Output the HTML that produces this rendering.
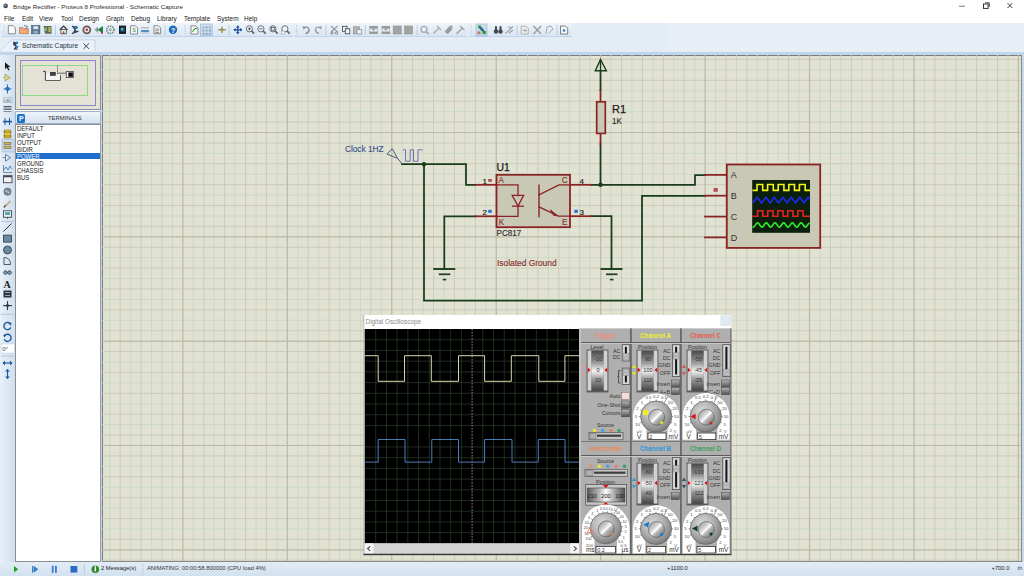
<!DOCTYPE html>
<html><head><meta charset="utf-8"><style>
*{margin:0;padding:0;box-sizing:border-box}
html,body{width:1024px;height:576px;overflow:hidden;background:#fff;font-family:"Liberation Sans", sans-serif;}
.a{position:absolute}
.t{position:absolute;white-space:nowrap;line-height:1}
</style></head>
<body>
<div class="a" style="left:0px;top:0px;width:1024px;height:22.5px;background:#fff"></div><svg class="a" style="left:0;top:0" width="1024" height="22"><circle cx="5.6" cy="5.9" r="2.3" fill="#3a4a5a"/><circle cx="5.1" cy="5.3" r="0.9" fill="#a8b8c8"/><line x1="959" y1="6.2" x2="965" y2="6.2" stroke="#666" stroke-width="0.9"/><rect x="983.5" y="4" width="4.6" height="4.4" fill="none" stroke="#222" stroke-width="0.9"/><path d="M985,2.8 L989.3,2.8 L989.3,7" fill="none" stroke="#222" stroke-width="0.8"/><path d="M1007.5,3.2 L1012.3,8 M1012.3,3.2 L1007.5,8" stroke="#222" stroke-width="0.9"/></svg><div class="t" style="left:13px;top:4.0px;font-size:6.25px;color:#2a2a2a;">Bridge Rectifier - Proteus 8 Professional - Schematic Capture</div><div class="t" style="left:4px;top:14.6px;font-size:7.2px;color:#1a1a1a;transform:scaleX(0.9);transform-origin:0 0">File</div><div class="t" style="left:21.6px;top:14.6px;font-size:7.2px;color:#1a1a1a;transform:scaleX(0.9);transform-origin:0 0">Edit</div><div class="t" style="left:39.2px;top:14.6px;font-size:7.2px;color:#1a1a1a;transform:scaleX(0.9);transform-origin:0 0">View</div><div class="t" style="left:60.6px;top:14.6px;font-size:7.2px;color:#1a1a1a;transform:scaleX(0.9);transform-origin:0 0">Tool</div><div class="t" style="left:79.2px;top:14.6px;font-size:7.2px;color:#1a1a1a;transform:scaleX(0.9);transform-origin:0 0">Design</div><div class="t" style="left:106.2px;top:14.6px;font-size:7.2px;color:#1a1a1a;transform:scaleX(0.9);transform-origin:0 0">Graph</div><div class="t" style="left:130.6px;top:14.6px;font-size:7.2px;color:#1a1a1a;transform:scaleX(0.9);transform-origin:0 0">Debug</div><div class="t" style="left:157px;top:14.6px;font-size:7.2px;color:#1a1a1a;transform:scaleX(0.9);transform-origin:0 0">Library</div><div class="t" style="left:184px;top:14.6px;font-size:7.2px;color:#1a1a1a;transform:scaleX(0.9);transform-origin:0 0">Template</div><div class="t" style="left:216.6px;top:14.6px;font-size:7.2px;color:#1a1a1a;transform:scaleX(0.9);transform-origin:0 0">System</div><div class="t" style="left:244.4px;top:14.6px;font-size:7.2px;color:#1a1a1a;transform:scaleX(0.9);transform-origin:0 0">Help</div><div class="a" style="left:0px;top:22.5px;width:1024px;height:29.3px;background:#e4ecf5"></div><div class="a" style="left:670px;top:22.5px;width:354px;height:29.3px;background:#e8eef6"></div><svg class="a" style="left:0;top:34px" width="110" height="20"><path d="M0,17.2 L11.8,5.9 L95,5.9 L95,17.2" fill="#eaf1f8" stroke="#c3d4e5" stroke-width="0.9"/><path d="M13.2,7.6 L18.5,9 L15.4,11 L18.8,12.6 L16,14 L18.6,15.4 L13.5,15.6 L15.5,12.5 L13.2,11 Z" fill="#2a3a50"/><circle cx="17" cy="8.8" r="1.2" fill="#2a80c8"/><circle cx="16.8" cy="13" r="1.2" fill="#2a80c8"/><path d="M83.4,9.3 L89,14.9 M89,9.3 L83.4,14.9" stroke="#3a3a3a" stroke-width="0.9"/></svg><div class="t" style="left:22px;top:43.0px;font-size:6.6px;color:#23303e;">Schematic Capture</div><div class="a" style="left:0px;top:51.6px;width:1024px;height:3.6px;background:#bfd5ea"></div><div class="a" style="left:0px;top:55px;width:15px;height:507px;background:linear-gradient(to right,#e8f0f8,#d0dfee)"></div><div class="a" style="left:15px;top:55px;width:86px;height:55px;background:#e3e2d4;border:1px solid #8a8f96"></div><div class="a" style="left:20px;top:60px;width:76px;height:46px;border:1.3px solid #8a86cc"></div><div class="a" style="left:22px;top:65px;width:66px;height:31px;border:1px solid #8ada8a"></div><div class="a" style="left:15px;top:111px;width:86px;height:13px;background:linear-gradient(#eef4fa,#d6e3f0);border:1px solid #9fb4c8"></div><div class="a" style="left:17px;top:113.5px;width:8.3px;height:9px;background:#1a73c8;border-radius:1.5px"></div><div class="t" style="left:19px;top:114.6px;font-size:7px;color:#fff;font-weight:bold">P</div><div class="t" style="left:48px;top:116.2px;font-size:5.9px;color:#333;">TERMINALS</div><div class="a" style="left:15px;top:124px;width:85.5px;height:438px;background:#fff;border:1px solid #8a8f96;border-right:1.6px solid #9a9ea4"></div><div class="a" style="left:16px;top:153.2px;width:84px;height:5.8px;background:#1f6dcc"></div><div class="t" style="left:17.4px;top:126.0px;font-size:6.35px;color:#1a1a1a;transform:scaleX(0.94);transform-origin:0 0">DEFAULT</div><div class="t" style="left:17.4px;top:132.95px;font-size:6.35px;color:#1a1a1a;transform:scaleX(0.94);transform-origin:0 0">INPUT</div><div class="t" style="left:17.4px;top:139.9px;font-size:6.35px;color:#1a1a1a;transform:scaleX(0.94);transform-origin:0 0">OUTPUT</div><div class="t" style="left:17.4px;top:146.85px;font-size:6.35px;color:#1a1a1a;transform:scaleX(0.94);transform-origin:0 0">BIDIR</div><div class="t" style="left:17.4px;top:153.8px;font-size:6.35px;color:#fff;transform:scaleX(0.94);transform-origin:0 0">POWER</div><div class="t" style="left:17.4px;top:160.75px;font-size:6.35px;color:#1a1a1a;transform:scaleX(0.94);transform-origin:0 0">GROUND</div><div class="t" style="left:17.4px;top:167.7px;font-size:6.35px;color:#1a1a1a;transform:scaleX(0.94);transform-origin:0 0">CHASSIS</div><div class="t" style="left:17.4px;top:174.65px;font-size:6.35px;color:#1a1a1a;transform:scaleX(0.94);transform-origin:0 0">BUS</div><div class="a" style="left:100.5px;top:55px;width:2px;height:507px;background:#c3d7ea"></div><div class="a" style="left:102px;top:55px;width:920px;height:507px;background:#e2e2d3;border-left:1px solid #777c80;border-top:1px solid #777c80"></div><div class="a" style="left:1022px;top:55px;width:2px;height:507px;background:#c7d9ea"></div><svg class="a" style="left:102px;top:55px" width="920" height="507"><g stroke="#c8d8c6" stroke-width="0.9"><line x1="7.79" y1="0" x2="7.79" y2="507"/><line x1="28.68" y1="0" x2="28.68" y2="507"/><line x1="49.57" y1="0" x2="49.57" y2="507"/><line x1="70.45" y1="0" x2="70.45" y2="507"/><line x1="91.34" y1="0" x2="91.34" y2="507"/><line x1="112.23" y1="0" x2="112.23" y2="507"/><line x1="133.12" y1="0" x2="133.12" y2="507"/><line x1="154.01" y1="0" x2="154.01" y2="507"/><line x1="174.89" y1="0" x2="174.89" y2="507"/><line x1="195.78" y1="0" x2="195.78" y2="507"/><line x1="216.67" y1="0" x2="216.67" y2="507"/><line x1="237.56" y1="0" x2="237.56" y2="507"/><line x1="258.45" y1="0" x2="258.45" y2="507"/><line x1="279.33" y1="0" x2="279.33" y2="507"/><line x1="300.22" y1="0" x2="300.22" y2="507"/><line x1="321.11" y1="0" x2="321.11" y2="507"/><line x1="342.00" y1="0" x2="342.00" y2="507"/><line x1="362.89" y1="0" x2="362.89" y2="507"/><line x1="383.77" y1="0" x2="383.77" y2="507"/><line x1="404.66" y1="0" x2="404.66" y2="507"/><line x1="425.55" y1="0" x2="425.55" y2="507"/><line x1="446.44" y1="0" x2="446.44" y2="507"/><line x1="467.33" y1="0" x2="467.33" y2="507"/><line x1="488.21" y1="0" x2="488.21" y2="507"/><line x1="509.10" y1="0" x2="509.10" y2="507"/><line x1="529.99" y1="0" x2="529.99" y2="507"/><line x1="550.88" y1="0" x2="550.88" y2="507"/><line x1="571.77" y1="0" x2="571.77" y2="507"/><line x1="592.65" y1="0" x2="592.65" y2="507"/><line x1="613.54" y1="0" x2="613.54" y2="507"/><line x1="634.43" y1="0" x2="634.43" y2="507"/><line x1="655.32" y1="0" x2="655.32" y2="507"/><line x1="676.21" y1="0" x2="676.21" y2="507"/><line x1="697.09" y1="0" x2="697.09" y2="507"/><line x1="717.98" y1="0" x2="717.98" y2="507"/><line x1="738.87" y1="0" x2="738.87" y2="507"/><line x1="759.76" y1="0" x2="759.76" y2="507"/><line x1="780.65" y1="0" x2="780.65" y2="507"/><line x1="801.53" y1="0" x2="801.53" y2="507"/><line x1="822.42" y1="0" x2="822.42" y2="507"/><line x1="843.31" y1="0" x2="843.31" y2="507"/><line x1="864.20" y1="0" x2="864.20" y2="507"/><line x1="885.09" y1="0" x2="885.09" y2="507"/><line x1="905.97" y1="0" x2="905.97" y2="507"/><line x1="0" y1="14.90" x2="920" y2="14.90"/><line x1="0" y1="35.77" x2="920" y2="35.77"/><line x1="0" y1="56.63" x2="920" y2="56.63"/><line x1="0" y1="98.37" x2="920" y2="98.37"/><line x1="0" y1="119.23" x2="920" y2="119.23"/><line x1="0" y1="140.10" x2="920" y2="140.10"/><line x1="0" y1="160.97" x2="920" y2="160.97"/><line x1="0" y1="202.70" x2="920" y2="202.70"/><line x1="0" y1="223.56" x2="920" y2="223.56"/><line x1="0" y1="244.43" x2="920" y2="244.43"/><line x1="0" y1="265.29" x2="920" y2="265.29"/><line x1="0" y1="307.03" x2="920" y2="307.03"/><line x1="0" y1="327.89" x2="920" y2="327.89"/><line x1="0" y1="348.76" x2="920" y2="348.76"/><line x1="0" y1="369.62" x2="920" y2="369.62"/><line x1="0" y1="411.36" x2="920" y2="411.36"/><line x1="0" y1="432.22" x2="920" y2="432.22"/><line x1="0" y1="453.09" x2="920" y2="453.09"/><line x1="0" y1="473.96" x2="920" y2="473.96"/></g><g stroke="#c8c8b4" stroke-width="0.9"><line x1="18.23" y1="0" x2="18.23" y2="507"/><line x1="39.12" y1="0" x2="39.12" y2="507"/><line x1="60.01" y1="0" x2="60.01" y2="507"/><line x1="101.79" y1="0" x2="101.79" y2="507"/><line x1="122.67" y1="0" x2="122.67" y2="507"/><line x1="143.56" y1="0" x2="143.56" y2="507"/><line x1="164.45" y1="0" x2="164.45" y2="507"/><line x1="206.23" y1="0" x2="206.23" y2="507"/><line x1="227.11" y1="0" x2="227.11" y2="507"/><line x1="248.00" y1="0" x2="248.00" y2="507"/><line x1="268.89" y1="0" x2="268.89" y2="507"/><line x1="310.67" y1="0" x2="310.67" y2="507"/><line x1="331.55" y1="0" x2="331.55" y2="507"/><line x1="352.44" y1="0" x2="352.44" y2="507"/><line x1="373.33" y1="0" x2="373.33" y2="507"/><line x1="415.11" y1="0" x2="415.11" y2="507"/><line x1="435.99" y1="0" x2="435.99" y2="507"/><line x1="456.88" y1="0" x2="456.88" y2="507"/><line x1="477.77" y1="0" x2="477.77" y2="507"/><line x1="519.55" y1="0" x2="519.55" y2="507"/><line x1="540.43" y1="0" x2="540.43" y2="507"/><line x1="561.32" y1="0" x2="561.32" y2="507"/><line x1="582.21" y1="0" x2="582.21" y2="507"/><line x1="623.99" y1="0" x2="623.99" y2="507"/><line x1="644.87" y1="0" x2="644.87" y2="507"/><line x1="665.76" y1="0" x2="665.76" y2="507"/><line x1="686.65" y1="0" x2="686.65" y2="507"/><line x1="728.43" y1="0" x2="728.43" y2="507"/><line x1="749.31" y1="0" x2="749.31" y2="507"/><line x1="770.20" y1="0" x2="770.20" y2="507"/><line x1="791.09" y1="0" x2="791.09" y2="507"/><line x1="832.87" y1="0" x2="832.87" y2="507"/><line x1="853.75" y1="0" x2="853.75" y2="507"/><line x1="874.64" y1="0" x2="874.64" y2="507"/><line x1="895.53" y1="0" x2="895.53" y2="507"/><line x1="0" y1="4.47" x2="920" y2="4.47"/><line x1="0" y1="25.34" x2="920" y2="25.34"/><line x1="0" y1="46.20" x2="920" y2="46.20"/><line x1="0" y1="67.07" x2="920" y2="67.07"/><line x1="0" y1="87.93" x2="920" y2="87.93"/><line x1="0" y1="108.80" x2="920" y2="108.80"/><line x1="0" y1="129.67" x2="920" y2="129.67"/><line x1="0" y1="150.53" x2="920" y2="150.53"/><line x1="0" y1="171.40" x2="920" y2="171.40"/><line x1="0" y1="192.26" x2="920" y2="192.26"/><line x1="0" y1="213.13" x2="920" y2="213.13"/><line x1="0" y1="234.00" x2="920" y2="234.00"/><line x1="0" y1="254.86" x2="920" y2="254.86"/><line x1="0" y1="275.73" x2="920" y2="275.73"/><line x1="0" y1="296.59" x2="920" y2="296.59"/><line x1="0" y1="317.46" x2="920" y2="317.46"/><line x1="0" y1="338.33" x2="920" y2="338.33"/><line x1="0" y1="359.19" x2="920" y2="359.19"/><line x1="0" y1="380.06" x2="920" y2="380.06"/><line x1="0" y1="400.92" x2="920" y2="400.92"/><line x1="0" y1="421.79" x2="920" y2="421.79"/><line x1="0" y1="442.66" x2="920" y2="442.66"/><line x1="0" y1="463.52" x2="920" y2="463.52"/><line x1="0" y1="484.39" x2="920" y2="484.39"/><line x1="0" y1="505.25" x2="920" y2="505.25"/></g><g stroke="#b9b9a5" stroke-width="1.2"><line x1="80.90" y1="0" x2="80.90" y2="507"/><line x1="185.34" y1="0" x2="185.34" y2="507"/><line x1="289.78" y1="0" x2="289.78" y2="507"/><line x1="394.22" y1="0" x2="394.22" y2="507"/><line x1="498.66" y1="0" x2="498.66" y2="507"/><line x1="603.10" y1="0" x2="603.10" y2="507"/><line x1="707.54" y1="0" x2="707.54" y2="507"/><line x1="811.98" y1="0" x2="811.98" y2="507"/><line x1="916.42" y1="0" x2="916.42" y2="507"/><line x1="0" y1="77.50" x2="920" y2="77.50"/><line x1="0" y1="181.83" x2="920" y2="181.83"/><line x1="0" y1="286.16" x2="920" y2="286.16"/><line x1="0" y1="390.49" x2="920" y2="390.49"/><line x1="0" y1="494.82" x2="920" y2="494.82"/></g></svg><div class="a" style="left:102px;top:561px;width:920px;height:1px;background:#8a8a84"></div><div class="a" style="left:1021px;top:55px;width:1px;height:507px;background:#8a8a84"></div><div class="a" style="left:0px;top:562px;width:1024px;height:14px;background:linear-gradient(#e2ecf6,#d2e1ef)"></div><div class="t" style="left:101px;top:566px;font-size:5.8px;color:#222;">2 Message(s)</div><div class="t" style="left:147px;top:566px;font-size:5.8px;color:#333;">ANIMATING: 00:00:58.800000 (CPU load 4%)</div><div class="t" style="left:667px;top:566px;font-size:5.8px;color:#222;">+1100.0</div><div class="t" style="left:991.5px;top:566px;font-size:5.8px;color:#222;">+700.0</div><div class="t" style="left:1017.5px;top:566px;font-size:5.8px;color:#2a5a7a;">th</div>
<svg class="a" style="left:0;top:0" width="1024" height="576"><defs>
<linearGradient id="tbg" x1="0" y1="0" x2="0" y2="1"><stop offset="0" stop-color="#eef4fa"/><stop offset="1" stop-color="#d8e5f2"/></linearGradient>
<linearGradient id="prs" x1="0" y1="0" x2="0" y2="1"><stop offset="0" stop-color="#cfe0f0"/><stop offset="1" stop-color="#bcd2e8"/></linearGradient>
</defs><rect x="2" y="23" width="180" height="13.8" fill="url(#tbg)"/><rect x="2" y="36" width="180" height="0.8" fill="#bcd0e4"/><line x1="4" y1="25" x2="4" y2="35" stroke="#9fb4c8" stroke-width="0.8" stroke-dasharray="0.8 1.2"/><rect x="183" y="23" width="110" height="13.8" fill="url(#tbg)"/><rect x="183" y="36" width="110" height="0.8" fill="#bcd0e4"/><line x1="185" y1="25" x2="185" y2="35" stroke="#9fb4c8" stroke-width="0.8" stroke-dasharray="0.8 1.2"/><rect x="294.5" y="23" width="173.0" height="13.8" fill="url(#tbg)"/><rect x="294.5" y="36" width="173.0" height="0.8" fill="#bcd0e4"/><line x1="296.5" y1="25" x2="296.5" y2="35" stroke="#9fb4c8" stroke-width="0.8" stroke-dasharray="0.8 1.2"/><rect x="469" y="23" width="103" height="13.8" fill="url(#tbg)"/><rect x="469" y="36" width="103" height="0.8" fill="#bcd0e4"/><line x1="471" y1="25" x2="471" y2="35" stroke="#9fb4c8" stroke-width="0.8" stroke-dasharray="0.8 1.2"/><line x1="55.5" y1="25" x2="55.5" y2="35" stroke="#b5c6d8" stroke-width="0.8"/><line x1="165" y1="25" x2="165" y2="35" stroke="#b5c6d8" stroke-width="0.8"/><line x1="229" y1="25" x2="229" y2="35" stroke="#b5c6d8" stroke-width="0.8"/><line x1="326" y1="25" x2="326" y2="35" stroke="#b5c6d8" stroke-width="0.8"/><line x1="365.5" y1="25" x2="365.5" y2="35" stroke="#b5c6d8" stroke-width="0.8"/><line x1="417" y1="25" x2="417" y2="35" stroke="#b5c6d8" stroke-width="0.8"/><line x1="517" y1="25" x2="517" y2="35" stroke="#b5c6d8" stroke-width="0.8"/><line x1="557" y1="25" x2="557" y2="35" stroke="#b5c6d8" stroke-width="0.8"/><rect x="200.5" y="24" width="11.7" height="12" fill="url(#prs)" stroke="#98b4d0" stroke-width="0.6"/><rect x="476" y="24" width="11" height="12" fill="url(#prs)" stroke="#98b4d0" stroke-width="0.6"/><path d="M8.3,25.6 L13.100000000000001,25.6 L15.3,27.8 L15.3,33.8 L8.3,33.8 Z" fill="#fbfbfb" stroke="#707070" stroke-width="0.8"/><path d="M19.6,27.5 L23,27.5 L24,28.6 L28.3,28.6 L28.3,33.6 L19.6,33.6 Z" fill="#f2a080" stroke="#c07050" stroke-width="0.7"/><path d="M24,25.5 L27.5,26.5 L25.5,29" fill="none" stroke="#5080b0" stroke-width="1"/><rect x="21.5" y="31.3" width="1.6" height="1.3" fill="#f0e020"/><rect x="24.2" y="31.3" width="1.6" height="1.3" fill="#f0e020"/><rect x="31.6" y="25.6" width="8.3" height="8.2" fill="#5a7894" stroke="#3a5670" stroke-width="0.6"/><rect x="33.4" y="26.2" width="4.8" height="3" fill="#dfe8f0"/><rect x="33.6" y="31" width="4" height="2.5" fill="#9ab0c4"/><path d="M43.5,26 L51.5,26 L51.5,33.8 L45,33.8 Z" fill="#606860"/><rect x="44" y="27.5" width="3" height="3.5" fill="#80b070"/><rect x="48.5" y="27" width="2" height="5" fill="#c0c060"/><path d="M59.8,30 L63.6,26 L67.4,30" fill="none" stroke="#303030" stroke-width="1.2"/><rect x="61" y="29.6" width="5.2" height="4.2" fill="#f8f8f8" stroke="#404040" stroke-width="0.8"/><rect x="62.8" y="31.3" width="1.6" height="2.5" fill="#a05030"/><path d="M72,26 L78,27.5 L74,30 L78.5,31.5 L72,33.8 L75,30 Z" fill="#3a4a6a" stroke="#1a2a4a" stroke-width="0.6"/><circle cx="76" cy="27" r="1.3" fill="#2a80c0"/><circle cx="86.8" cy="29.8" r="3.5" fill="none" stroke="#6a5a50" stroke-width="1.8"/><circle cx="86.8" cy="29.8" r="1.3" fill="#d03030"/><path d="M94.5,29.8 L98,26.5 L98,33 Z" fill="#8aa0a0"/><path d="M97.5,29.8 L103,26 L103,33.6 Z" fill="#208040"/><rect x="101" y="32" width="2" height="1.6" fill="#c03030"/><circle cx="110.3" cy="29.8" r="3.6" fill="none" stroke="#80908a" stroke-width="1.8" stroke-dasharray="1.5 0.8"/><circle cx="110.3" cy="29.8" r="1.5" fill="#a0b0a0"/><rect x="119" y="25.6" width="7" height="8.3" fill="#1a1a1a"/><rect x="120.5" y="27.5" width="4" height="4" fill="#2a6aa0"/><rect x="121" y="28" width="2" height="2" fill="#40c0a0"/><path d="M130.6,25.8 L135.4,25.8 L137.6,28.0 L137.6,34.0 L130.6,34.0 Z" fill="#fbfbfb" stroke="#707070" stroke-width="0.8"/><text x="132.4" y="32.4" font-size="6" fill="#50a040" font-family="Liberation Sans">$</text><rect x="141" y="27" width="8" height="1.4" fill="#b0b8c8"/><rect x="141" y="30" width="8" height="2.2" fill="#5090c0"/><rect x="141" y="32.8" width="8" height="0.8" fill="#c0c8d8"/><path d="M154,25.8 L158.4,25.8 L160.6,28.0 L160.6,33.8 L154,33.8 Z" fill="#fbfbfb" stroke="#707070" stroke-width="0.8"/><line x1="155.3" y1="29" x2="159.2" y2="29" stroke="#555" stroke-width="0.7"/><line x1="155.3" y1="30.8" x2="159.2" y2="30.8" stroke="#555" stroke-width="0.7"/><line x1="155.3" y1="32.6" x2="159.2" y2="32.6" stroke="#555" stroke-width="0.7"/><circle cx="173" cy="29.8" r="4.2" fill="#1a6ab8"/><text x="170.9" y="32.6" font-size="7" font-weight="bold" fill="#fff" font-family="Liberation Sans">?</text><path d="M191,25.8 L195.8,25.8 L198,28.0 L198,34.0 L191,34.0 Z" fill="#fbfbfb" stroke="#707070" stroke-width="0.8"/><path d="M192.5,32 Q195,27 197,29" fill="none" stroke="#40a040" stroke-width="1.1"/><rect x="202.7" y="26.6" width="1.6" height="1.6" fill="#8a9aaa"/><rect x="205.89999999999998" y="26.6" width="1.6" height="1.6" fill="#8a9aaa"/><rect x="209.1" y="26.6" width="1.6" height="1.6" fill="#8a9aaa"/><rect x="202.7" y="29.8" width="1.6" height="1.6" fill="#8a9aaa"/><rect x="205.89999999999998" y="29.8" width="1.6" height="1.6" fill="#8a9aaa"/><rect x="209.1" y="29.8" width="1.6" height="1.6" fill="#8a9aaa"/><rect x="202.7" y="33.0" width="1.6" height="1.6" fill="#8a9aaa"/><rect x="205.89999999999998" y="33.0" width="1.6" height="1.6" fill="#8a9aaa"/><rect x="209.1" y="33.0" width="1.6" height="1.6" fill="#8a9aaa"/><line x1="218" y1="29.8" x2="226" y2="29.8" stroke="#807060" stroke-width="1"/><line x1="222" y1="26.5" x2="222" y2="33" stroke="#807060" stroke-width="1"/><circle cx="222" cy="29.8" r="1.6" fill="#a09040"/><path d="M237.8,26 L237.8,33.6 M234,29.8 L241.6,29.8" stroke="#1a4aa0" stroke-width="1.3"/><path d="M237.8,25.3 L236,27.6 L239.6,27.6 Z M237.8,34.3 L236,32 L239.6,32 Z M233.3,29.8 L235.6,28 L235.6,31.6 Z M242.3,29.8 L240,28 L240,31.6 Z" fill="#1a4aa0"/><circle cx="249.4" cy="28.8" r="3.1" fill="#f0f4f8" stroke="#6a7078" stroke-width="1"/><line x1="251.5" y1="30.9" x2="254.10000000000002" y2="33.7" stroke="#606468" stroke-width="1.7"/><path d="M247.8,28.8 L251.0,28.8 M249.4,27.2 L249.4,30.4" stroke="#404850" stroke-width="0.8"/><circle cx="260.90000000000003" cy="28.8" r="3.1" fill="#f0f4f8" stroke="#6a7078" stroke-width="1"/><line x1="263.0" y1="30.9" x2="265.6" y2="33.7" stroke="#606468" stroke-width="1.7"/><path d="M259.3,28.8 L262.5,28.8" stroke="#404850" stroke-width="0.8"/><circle cx="272.90000000000003" cy="28.8" r="3.1" fill="#f0f4f8" stroke="#6a7078" stroke-width="1"/><line x1="275.0" y1="30.9" x2="277.6" y2="33.7" stroke="#606468" stroke-width="1.7"/><rect x="271.5" y="27.4" width="2.8" height="2.8" fill="none" stroke="#404850" stroke-width="0.7"/><circle cx="284.90000000000003" cy="28.8" r="3.1" fill="#f0f4f8" stroke="#6a7078" stroke-width="1"/><line x1="287.0" y1="30.9" x2="289.6" y2="33.7" stroke="#606468" stroke-width="1.7"/><rect x="281.3" y="31" width="3.2" height="3" fill="#fff" stroke="#8a8a8a" stroke-width="0.5"/><path d="M303.5,27.5 Q309.5,26 309,30.5 Q308.5,33 305.5,33.5" fill="none" stroke="#8a8a8a" stroke-width="1.4"/><path d="M302.5,26 L303.5,29.5 L306,27.5 Z" fill="#8a8a8a"/><path d="M321,27.5 Q315,26 315.5,30.5 Q316,33 319,33.5" fill="none" stroke="#9a9a9a" stroke-width="1.4"/><path d="M322,26 L321,29.5 L318.5,27.5 Z" fill="#9a9a9a"/><path d="M331,26 L337.5,32 M337.5,26 L331,32" stroke="#9a9a9a" stroke-width="1.2"/><circle cx="332" cy="33" r="1.2" fill="none" stroke="#8a8a8a"/><circle cx="336.5" cy="33" r="1.2" fill="none" stroke="#8a8a8a"/><rect x="342.5" y="26.3" width="4.5" height="5" fill="#f4f4f4" stroke="#404040" stroke-width="0.8"/><rect x="345.3" y="28.8" width="4.5" height="5" fill="#f4f4f4" stroke="#404040" stroke-width="0.8"/><rect x="353.5" y="26.8" width="6" height="7" fill="#b8b8b8" stroke="#8a8a8a" stroke-width="0.7"/><rect x="357" y="29.5" width="4.8" height="4.5" fill="#eee" stroke="#8a8a8a" stroke-width="0.7"/><rect x="369.3" y="26" width="8.6" height="2.2" fill="#9a9a9a"/><rect x="369.3" y="32" width="8.6" height="2" fill="#9a9a9a"/><path d="M371.3,28.2 L375.90000000000003,28.2 L373.6,31 Z" fill="#9a9a9a"/><rect x="369.8" y="28.5" width="7.6" height="3.3" fill="none" stroke="#a8a8a8" stroke-width="0.6"/><rect x="381.6" y="26" width="8.6" height="2.2" fill="#9a9a9a"/><rect x="381.6" y="32" width="8.6" height="2" fill="#9a9a9a"/><path d="M383.6,28.2 L388.20000000000005,28.2 L385.90000000000003,31 Z" fill="#9a9a9a"/><rect x="382.1" y="28.5" width="7.6" height="3.3" fill="none" stroke="#a8a8a8" stroke-width="0.6"/><rect x="393.2" y="26" width="8" height="8" fill="#a4a4a4" stroke="#909090" stroke-width="0.6"/><rect x="404.5" y="26" width="8" height="8" fill="#a4a4a4" stroke="#909090" stroke-width="0.6"/><circle cx="424" cy="29.3" r="3" fill="none" stroke="#a8a8a8" stroke-width="1.3"/><line x1="426" y1="31.4" x2="428.8" y2="34" stroke="#a0a0a0" stroke-width="1.4"/><path d="M433.5,33.5 L439,28 M437,26 L441,30" stroke="#b0b0b0" stroke-width="1.5"/><path d="M444.5,32 L449,26.5 L452.5,29 L448,34 Z" fill="#9a9a9a"/><circle cx="451" cy="27" r="1.8" fill="#a8a8a8"/><path d="M456.5,33.8 L462,28.5 M460,26 L464.5,30" stroke="#a8a8a8" stroke-width="1.6"/><rect x="478" y="25.5" width="3" height="2.5" fill="#30a040"/><path d="M479.5,28 L485,33 M481,27 L484,31" stroke="#2a5a80" stroke-width="1.2"/><rect x="482.5" y="31" width="3.5" height="3" fill="#30a040"/><rect x="477.5" y="31.5" width="3" height="2.5" fill="#d07060"/><circle cx="496" cy="31.5" r="2.2" fill="#404850"/><circle cx="500.5" cy="31.5" r="2.2" fill="#404850"/><rect x="495" y="26.2" width="2" height="4" fill="#404850"/><rect x="499.5" y="26.2" width="2" height="4" fill="#404850"/><path d="M505.5,33.5 L513,26.5 M508,27 L512,27.5 M509,33 L513,30" stroke="#a0a0a0" stroke-width="1.2"/><path d="M521.2,26.2 L526.0,26.2 L528.2,28.4 L528.2,34.0 L521.2,34.0 Z" fill="#f0f0f0" stroke="#a0a0a0" stroke-width="0.8"/><path d="M523,30.5 L527,30.5 M525,28.5 L525,32.5" stroke="#999" stroke-width="0.8"/><path d="M533.5,26 L541,34 M541,26 L533.5,34" stroke="#a0a0a0" stroke-width="1.6"/><path d="M546,34 L547,27 L551,26 L553,29 L549,33" fill="none" stroke="#a8a8a8" stroke-width="1"/><path d="M560.5,26 L565.5,26 L567.7,28.2 L567.7,34 L560.5,34 Z" fill="#f8f8f8" stroke="#606060" stroke-width="0.8"/><circle cx="564" cy="30.5" r="1.3" fill="#2a7ac0"/><rect x="2" y="139" width="12" height="13" fill="#c8daec" stroke="#9cb6cf" stroke-width="0.6"/><path d="M5,62.3 L5,69.3 L6.8,67.6 L8.3,70.6 L9.5,69.89999999999999 L8.1,67.0 L10.4,66.89999999999999 Z" fill="#1a1a1a"/><path d="M5,74.0 L10.5,77.6 L5,81.19999999999999 Z" fill="#e0d070" stroke="#909060" stroke-width="0.6"/><line x1="3" y1="77.6" x2="5" y2="77.6" stroke="#888" stroke-width="0.6"/><line x1="7.5" y1="84.4" x2="7.5" y2="93.4" stroke="#2060a0" stroke-width="0.9"/><line x1="3.5" y1="88.9" x2="11.5" y2="88.9" stroke="#2060a0" stroke-width="0.9"/><circle cx="7.5" cy="88.9" r="2.1" fill="#2070c0"/><rect x="3.5" y="97.5" width="8.5" height="5" fill="none" stroke="#8090a0" stroke-width="0.6" stroke-dasharray="1 0.6"/><text x="4" y="102" font-size="4" fill="#506070" font-family="Liberation Sans">LBL</text><rect x="3.5" y="106" width="8" height="1.3" fill="#505a64"/><rect x="3.5" y="108.5" width="8" height="1.3" fill="#505a64"/><rect x="3.5" y="111" width="8" height="1" fill="#8090a0"/><line x1="3" y1="121.6" x2="12" y2="121.6" stroke="#1a5aa0" stroke-width="1.6"/><line x1="5" y1="118.1" x2="5" y2="125.1" stroke="#1a5aa0" stroke-width="1"/><line x1="9.5" y1="118.1" x2="9.5" y2="125.1" stroke="#1a5aa0" stroke-width="1"/><rect x="4.5" y="130" width="6" height="8" fill="#e8c830" stroke="#807030" stroke-width="0.6"/><line x1="3" y1="132" x2="12" y2="132" stroke="#605020" stroke-width="0.6"/><line x1="3" y1="136" x2="12" y2="136" stroke="#605020" stroke-width="0.6"/><rect x="4" y="142.3" width="7" height="2.4" fill="#d0b040" stroke="#606060" stroke-width="0.5"/><rect x="4" y="146.10000000000002" width="7" height="2.4" fill="#d0b040" stroke="#606060" stroke-width="0.5"/><path d="M5.5,154.2 L10.5,157.7 L5.5,161.2 Z" fill="none" stroke="#4a6a8a" stroke-width="0.8"/><line x1="2.5" y1="157.7" x2="5.5" y2="157.7" stroke="#4a6a8a" stroke-width="0.8"/><path d="M3.5,172.5 L12,172.5 M3.5,165 L3.5,172.5" stroke="#506070" stroke-width="0.7" fill="none"/><polyline points="4,170 6,167 8,170 10,166 12,169" fill="none" stroke="#2a6ab0" stroke-width="0.8"/><rect x="3.5" y="175.7" width="8.5" height="7" fill="#f4f4f4" stroke="#404a54" stroke-width="0.9"/><rect x="3.5" y="175.7" width="8.5" height="1.6" fill="#404a54"/><circle cx="7.5" cy="191.7" r="3.6" fill="#7a8a9a" stroke="#4a5a6a" stroke-width="0.6"/><path d="M5,191.7 Q6.5,189.2 7.5,191.7 T10,191.7" fill="none" stroke="#e0e8f0" stroke-width="0.8"/><path d="M4,207.5 L10.5,201" stroke="#c0a060" stroke-width="1.4"/><path d="M4,207.5 L5.5,205.2" stroke="#505050" stroke-width="1.2"/><rect x="3.5" y="210.8" width="8" height="6.5" fill="#f0f0f0" stroke="#404a54" stroke-width="0.9"/><rect x="5" y="212.3" width="5" height="2.5" fill="#40a0a0"/><line x1="7.5" y1="217.3" x2="7.5" y2="218.8" stroke="#404a54" stroke-width="1"/><line x1="1" y1="221.5" x2="14" y2="221.5" stroke="#a9bdd0" stroke-width="0.8"/><line x1="3.5" y1="231.5" x2="11.5" y2="223.5" stroke="#2a3a4a" stroke-width="1"/><rect x="3.5" y="235.1" width="8" height="7" fill="#6a8aa0" stroke="#2a3a4a" stroke-width="0.8"/><circle cx="7.5" cy="250" r="4" fill="#6a8aa0" stroke="#2a3a4a" stroke-width="0.8"/><path d="M4,264.5 L4,257.5 Q10.5,257.5 10.5,264.5 Z" fill="none" stroke="#2a3a4a" stroke-width="0.8"/><path d="M3.5,272.6 Q5.5,268.6 7.5,272.6 Q9.5,276.6 11.5,272.6 Q9.5,268.6 7.5,272.6 Q5.5,276.6 3.5,272.6 Z" fill="#7a9ab0" stroke="#2a3a4a" stroke-width="0.8"/><text x="3.5" y="287.55" font-size="10" font-weight="bold" fill="#1a1a1a" font-family="Liberation Serif">A</text><rect x="3.5" y="290.5" width="8" height="7" fill="#2a3440"/><path d="M5,292.5 L10,292.5 M5,295.5 L10,295.5" stroke="#c0c8d0" stroke-width="0.8"/><line x1="7.5" y1="301.1" x2="7.5" y2="310.1" stroke="#2a3a4a" stroke-width="1.1"/><line x1="3" y1="305.6" x2="12" y2="305.6" stroke="#2a3a4a" stroke-width="1.1"/><circle cx="7.5" cy="305.6" r="1.5" fill="#2a3a4a"/><line x1="1" y1="314.3" x2="14" y2="314.3" stroke="#a9bdd0" stroke-width="0.8"/><path d="M10.5,324.0 A3.6,3.6 0 1 0 10.8,327.5" fill="none" stroke="#1a5aa0" stroke-width="1.4"/><path d="M9,322.3 L11.8,323.3 L10.2,326.0 Z" fill="#1a5aa0"/><path d="M4.5,335.8 A3.6,3.6 0 1 1 4.2,339.3" fill="none" stroke="#1a5aa0" stroke-width="1.4"/><path d="M6,334.1 L3.2,335.1 L4.8,337.8 Z" fill="#1a5aa0"/><rect x="1" y="344" width="13.5" height="9" fill="#fff" stroke="#b8c8d8" stroke-width="0.5"/><text x="2.2" y="351" font-size="6" fill="#444" font-family="Liberation Sans">0°</text><line x1="1" y1="356" x2="14" y2="356" stroke="#a9bdd0" stroke-width="0.8"/><line x1="3" y1="363" x2="12" y2="363" stroke="#1a5aa0" stroke-width="1.2"/><path d="M2.5,363 L5,360.6 L5,365.4 Z M12.5,363 L10,360.6 L10,365.4 Z" fill="#1a5aa0"/><line x1="7.5" y1="369.5" x2="7.5" y2="378.5" stroke="#1a5aa0" stroke-width="1.2"/><path d="M7.5,369 L5.1,371.5 L9.9,371.5 Z M7.5,379 L5.1,376.5 L9.9,376.5 Z" fill="#1a5aa0"/><path d="M14,566 L18.2,569.3 L14,572.6 Z" fill="#20a020"/><rect x="32" y="566" width="1.5" height="6.6" fill="#3a7ac8"/><path d="M34,566 L38.3,569.3 L34,572.6 Z" fill="#3a7ac8"/><rect x="51.8" y="565.8" width="1.8" height="7" fill="#3a7ac8"/><rect x="55" y="565.8" width="1.8" height="7" fill="#3a7ac8"/><rect x="70.5" y="566" width="6.8" height="6.6" fill="#2a6ac8"/><line x1="84.4" y1="564" x2="84.4" y2="575" stroke="#b0c4d8" stroke-width="0.8"/><circle cx="95.3" cy="569.3" r="3.8" fill="#2a8a2a"/><rect x="94.6" y="567.2" width="1.5" height="4.2" fill="#fff"/><rect x="94.6" y="565.8" width="1.5" height="1" fill="#fff"/><line x1="143" y1="564" x2="143" y2="575" stroke="#a0b4c8" stroke-width="0.8" stroke-dasharray="1 1"/><path d="M43,71.4 L45.4,71.4 L45.4,80.3 L60.4,80.3 L60.4,75.3" fill="none" stroke="#404040" stroke-width="1"/><rect x="46" y="73" width="14" height="7" fill="#f4f4f0"/><rect x="50" y="72" width="5.8" height="3.8" fill="#404040"/><line x1="57.5" y1="65.8" x2="57.5" y2="75" stroke="#303030" stroke-width="0.8" stroke-dasharray="1 0.8"/><line x1="57.5" y1="73.2" x2="66" y2="73.2" stroke="#606060" stroke-width="1"/><rect x="66.3" y="71.4" width="7" height="6.2" fill="#fff" stroke="#404040" stroke-width="0.8"/><rect x="68.3" y="72.4" width="4.6" height="4.4" fill="#101010"/></svg>
<svg class="a" style="left:0;top:0" width="1024" height="576" font-family='"Liberation Sans", sans-serif'><polyline points="402,164.2 466,164.2 466,184.8 475.5,184.8" fill="none" stroke="#1a3c1a" stroke-width="1.75" stroke-linejoin="miter" stroke-linecap="square"/><polyline points="424,164.2 424,300.5 642,300.5 642,195.8 705,195.8" fill="none" stroke="#1a3c1a" stroke-width="1.75" stroke-linejoin="miter" stroke-linecap="square"/><polyline points="475.5,216.3 444.3,216.3 444.3,269" fill="none" stroke="#1a3c1a" stroke-width="1.75" stroke-linejoin="miter" stroke-linecap="square"/><polyline points="591,184.8 695,184.8 695,175 705,175" fill="none" stroke="#1a3c1a" stroke-width="1.75" stroke-linejoin="miter" stroke-linecap="square"/><polyline points="591,216.2 611.5,216.2 611.5,269" fill="none" stroke="#1a3c1a" stroke-width="1.75" stroke-linejoin="miter" stroke-linecap="square"/><polyline points="600.5,71 600.5,90" fill="none" stroke="#1a3c1a" stroke-width="1.75" stroke-linejoin="miter" stroke-linecap="square"/><polyline points="600.5,144 600.5,184.8" fill="none" stroke="#1a3c1a" stroke-width="1.75" stroke-linejoin="miter" stroke-linecap="square"/><circle cx="424" cy="164.2" r="2.2" fill="#1a3c1a"/><circle cx="600.5" cy="184.8" r="2.2" fill="#1a3c1a"/><line x1="433.3" y1="269" x2="455.3" y2="269" stroke="#1a3c1a" stroke-width="1.9"/><line x1="438.8" y1="274.3" x2="450.3" y2="274.3" stroke="#1a3c1a" stroke-width="1.7"/><line x1="442.7" y1="279.6" x2="446.3" y2="279.6" stroke="#1a3c1a" stroke-width="1.6"/><line x1="600.5" y1="269" x2="622.5" y2="269" stroke="#1a3c1a" stroke-width="1.9"/><line x1="606.0" y1="274.3" x2="617.5" y2="274.3" stroke="#1a3c1a" stroke-width="1.7"/><line x1="609.9" y1="279.6" x2="613.5" y2="279.6" stroke="#1a3c1a" stroke-width="1.6"/><path d="M600.5,59.5 L595.3,70.7 L606.4,70.7 Z" fill="none" stroke="#1a3c1a" stroke-width="1.4" stroke-linejoin="miter"/><line x1="600.5" y1="59.5" x2="600.5" y2="71" stroke="#1a3c1a" stroke-width="1.4"/><polyline points="600.5,90 600.5,101.5" fill="none" stroke="#8a2424" stroke-width="1.75" stroke-linejoin="miter" stroke-linecap="square"/><polyline points="600.5,133.5 600.5,144" fill="none" stroke="#8a2424" stroke-width="1.75" stroke-linejoin="miter" stroke-linecap="square"/><rect x="596.7" y="101.8" width="8.6" height="31.6" fill="#c8c9b6" stroke="#8a2424" stroke-width="1.7"/><text x="612" y="112.6" font-size="11.4" fill="#1a1a1a" stroke="#1a1a1a" stroke-width="0.25" textLength="14" lengthAdjust="spacingAndGlyphs">R1</text><text x="612" y="124.4" font-size="8.4" fill="#2a2a2a" stroke="#2a2a2a" stroke-width="0.15" textLength="9.8" lengthAdjust="spacingAndGlyphs">1K</text><rect x="496.5" y="174.8" width="73.5" height="52.4" fill="#c9c8b5" stroke="#8a2424" stroke-width="1.8"/><polyline points="475.5,184.8 496.5,184.8" fill="none" stroke="#8a2424" stroke-width="1.75" stroke-linejoin="miter" stroke-linecap="square"/><polyline points="475.5,216.3 496.5,216.3" fill="none" stroke="#8a2424" stroke-width="1.75" stroke-linejoin="miter" stroke-linecap="square"/><polyline points="570,184.8 591,184.8" fill="none" stroke="#8a2424" stroke-width="1.75" stroke-linejoin="miter" stroke-linecap="square"/><polyline points="570,216.2 591,216.2" fill="none" stroke="#8a2424" stroke-width="1.75" stroke-linejoin="miter" stroke-linecap="square"/><polyline points="496.5,184.8 518,184.8 518,195.5" fill="none" stroke="#8a2424" stroke-width="1.3" stroke-linejoin="miter" stroke-linecap="square"/><polyline points="518,206 518,216.3 496.5,216.3" fill="none" stroke="#8a2424" stroke-width="1.3" stroke-linejoin="miter" stroke-linecap="square"/><path d="M512.2,195.3 L523.6,195.3 L518,206 Z" fill="none" stroke="#8a2424" stroke-width="1.3"/><line x1="512" y1="206.2" x2="524" y2="206.2" stroke="#8a2424" stroke-width="1.3"/><line x1="539" y1="184.4" x2="539" y2="217.2" stroke="#8a2424" stroke-width="1.4"/><polyline points="539,194.8 559,184.8 570,184.8" fill="none" stroke="#8a2424" stroke-width="1.3" stroke-linejoin="miter" stroke-linecap="square"/><polyline points="539,206.9 558.4,216.2 570,216.2" fill="none" stroke="#8a2424" stroke-width="1.3" stroke-linejoin="miter" stroke-linecap="square"/><path d="M557.5,215.8 L550.5,210 L553.5,215.2 Z" fill="#8a2424" stroke="#8a2424" stroke-width="1"/><text x="496.6" y="170.6" font-size="10.4" fill="#1a1a1a" stroke="#1a1a1a" stroke-width="0.25">U1</text><text x="498.6" y="183.2" font-size="8.2" fill="#8a3030" stroke="#8a3030" stroke-width="0.1">A</text><text x="498.8" y="224.6" font-size="8.2" fill="#8a3030" stroke="#8a3030" stroke-width="0.1">K</text><text x="561.8" y="183.3" font-size="8.2" fill="#8a3030" stroke="#8a3030" stroke-width="0.1">C</text><text x="562" y="225" font-size="8.2" fill="#8a3030" stroke="#8a3030" stroke-width="0.1">E</text><text x="482.4" y="184" font-size="8" fill="#1a1a1a" stroke="#1a1a1a" stroke-width="0.15">1</text><text x="482.4" y="214.9" font-size="8" fill="#1a1a1a" stroke="#1a1a1a" stroke-width="0.15">2</text><text x="579.6" y="183.6" font-size="8" fill="#1a1a1a" stroke="#1a1a1a" stroke-width="0.15">4</text><text x="579.6" y="214.9" font-size="8" fill="#1a1a1a" stroke="#1a1a1a" stroke-width="0.15">3</text><rect x="488.2" y="179" width="3.6" height="2.8" fill="#b05050"/><rect x="488.2" y="209.8" width="3.6" height="3" fill="#2a72d0"/><rect x="574.3" y="209.8" width="3.6" height="3" fill="#2a72d0"/><text x="496.6" y="235.6" font-size="8.3" fill="#2a2a2a" stroke="#2a2a2a" stroke-width="0.15" textLength="24.6" lengthAdjust="spacingAndGlyphs">PC817</text><text x="497" y="266.4" font-size="8.6" fill="#883030" stroke="#883030" stroke-width="0.15" textLength="59.6" lengthAdjust="spacingAndGlyphs">Isolated Ground</text><text x="344.9" y="152.2" font-size="9.4" fill="#34508a" stroke="#34508a" stroke-width="0.12" textLength="38.8" lengthAdjust="spacingAndGlyphs">Clock 1HZ</text><path d="M392.2,148.7 L386.9,154 L397.6,158.4 Z" fill="none" stroke="#4a6080" stroke-width="1"/><line x1="397.6" y1="158.4" x2="402" y2="163.8" stroke="#4a6080" stroke-width="1"/><polyline points="403,149.8 405.5,149.8 405.5,161.2 410.2,161.2 410.2,149.8 413.5,149.8 413.5,161.2 418,161.2 418,149.8 422.5,149.8" fill="none" stroke="#7070b0" stroke-width="1"/><polyline points="705,174.9 726.7,174.9" fill="none" stroke="#8a2424" stroke-width="1.75" stroke-linejoin="miter" stroke-linecap="square"/><polyline points="705,195.7 726.7,195.7" fill="none" stroke="#8a2424" stroke-width="1.75" stroke-linejoin="miter" stroke-linecap="square"/><polyline points="705,216.6 726.7,216.6" fill="none" stroke="#8a2424" stroke-width="1.75" stroke-linejoin="miter" stroke-linecap="square"/><polyline points="705,237.4 726.7,237.4" fill="none" stroke="#8a2424" stroke-width="1.75" stroke-linejoin="miter" stroke-linecap="square"/><rect x="726.8" y="164.5" width="93.4" height="83.4" fill="#c9c8b5" stroke="#8a2424" stroke-width="1.8"/><text x="730.8" y="177.9" font-size="9" fill="#333">A</text><text x="730.8" y="199.1" font-size="9" fill="#333">B</text><text x="730.8" y="219.7" font-size="9" fill="#333">C</text><text x="730.8" y="240.7" font-size="9" fill="#333">D</text><rect x="713.6" y="188" width="4.2" height="3.8" fill="#b05050"/><rect x="752.2" y="180" width="57.8" height="52.8" fill="#0c1e0c"/><polyline points="752.5,190.4 757.0,190.4 757.0,184.5 762.7,184.5 762.7,190.4 767.6,190.4 767.6,184.5 773.3,184.5 773.3,190.4 778.2,190.4 778.2,184.5 783.9,184.5 783.9,190.4 788.8,190.4 788.8,184.5 794.5,184.5 794.5,190.4 799.4,190.4 799.4,184.5 805.2,184.5 805.2,190.4 810.0,190.4" fill="none" stroke="#f4f420" stroke-width="1.6"/><polyline points="752.5,216.3 757.6,216.3 757.6,210.8 762.8,210.8 762.8,216.3 767.7,216.3 767.7,210.8 772.9,210.8 772.9,216.3 777.8,216.3 777.8,210.8 783.0,210.8 783.0,216.3 787.8,216.3 787.8,210.8 793.0,210.8 793.0,216.3 797.9,216.3 797.9,210.8 803.1,210.8 803.1,216.3 810.0,216.3" fill="none" stroke="#e82020" stroke-width="1.6"/><polyline points="752.8,203.0 757.3,197.2 761.5,203.0 766.0,197.2 770.2,203.0 774.3,197.2 778.5,203.0 783.0,197.2 787.2,203.0 791.3,197.2 795.5,203.0 799.7,197.2 804.0,203.0 808.0,197.2 810.0,199.0" fill="none" stroke="#1a2ae8" stroke-width="1.7" stroke-linejoin="round"/><polyline points="752.5,226.8 753.1,227.1 753.7,227.0 754.3,226.5 754.9,225.8 755.5,224.9 756.1,224.0 756.7,223.3 757.3,222.9 757.9,222.9 758.5,223.3 759.1,224.0 759.7,224.9 760.3,225.8 760.9,226.5 761.5,227.0 762.1,227.1 762.7,226.8 763.3,226.2 763.9,225.3 764.5,224.4 765.1,223.6 765.7,223.1 766.3,222.9 766.9,223.1 767.5,223.6 768.1,224.4 768.7,225.3 769.3,226.2 769.9,226.8 770.5,227.1 771.1,227.0 771.7,226.5 772.3,225.8 772.9,224.9 773.5,224.0 774.1,223.3 774.7,222.9 775.3,222.9 775.9,223.3 776.5,224.0 777.1,224.9 777.7,225.8 778.3,226.5 778.9,227.0 779.5,227.1 780.1,226.8 780.7,226.2 781.3,225.3 781.9,224.4 782.5,223.6 783.1,223.1 783.7,222.9 784.3,223.1 784.9,223.6 785.5,224.4 786.1,225.3 786.7,226.2 787.3,226.8 787.9,227.1 788.5,227.0 789.1,226.5 789.7,225.8 790.3,224.9 790.9,224.0 791.5,223.3 792.1,222.9 792.7,222.9 793.3,223.3 793.9,224.0 794.5,224.9 795.1,225.8 795.7,226.5 796.3,227.0 796.9,227.1 797.5,226.8 798.1,226.2 798.7,225.3 799.3,224.4 799.9,223.6 800.5,223.1 801.1,222.9 801.7,223.1 802.3,223.6 802.9,224.4 803.5,225.3 804.1,226.2 804.7,226.8 805.3,227.1 805.9,227.0 806.5,226.5 807.1,225.8 807.7,224.9 808.3,224.0 808.9,223.3 809.5,222.9" fill="none" stroke="#2ee82e" stroke-width="1.7"/></svg>
<svg class="a" style="left:0;top:0" width="1024" height="576" font-family='"Liberation Sans", sans-serif'><defs>
<linearGradient id="drumV" x1="0" y1="0" x2="0" y2="1">
 <stop offset="0" stop-color="#4a4a4a"/><stop offset="0.3" stop-color="#9a9a9a"/><stop offset="0.5" stop-color="#f4f4f4"/><stop offset="0.7" stop-color="#9a9a9a"/><stop offset="1" stop-color="#404040"/>
</linearGradient>
<linearGradient id="drumH" x1="0" y1="0" x2="1" y2="0">
 <stop offset="0" stop-color="#5a5a5a"/><stop offset="0.3" stop-color="#b0b0b0"/><stop offset="0.5" stop-color="#fafafa"/><stop offset="0.7" stop-color="#b0b0b0"/><stop offset="1" stop-color="#505050"/>
</linearGradient>
<linearGradient id="btn" x1="0" y1="0" x2="0" y2="1">
 <stop offset="0" stop-color="#b8b8b8"/><stop offset="1" stop-color="#505050"/>
</linearGradient>
<radialGradient id="knobO" cx="0.4" cy="0.35" r="0.75">
 <stop offset="0" stop-color="#dedede"/><stop offset="0.45" stop-color="#b4b4b4"/><stop offset="0.8" stop-color="#888888"/><stop offset="1" stop-color="#666666"/>
</radialGradient>
<linearGradient id="knobI" x1="0" y1="0" x2="1" y2="1">
 <stop offset="0" stop-color="#8a8a8a"/><stop offset="0.38" stop-color="#d4d4d4"/><stop offset="0.5" stop-color="#ffffff"/><stop offset="0.58" stop-color="#bcbcbc"/><stop offset="1" stop-color="#5a5a5a"/>
</linearGradient>
</defs><rect x="363.5" y="314.8" width="1.5" height="240.5" fill="#a4a4a4"/><rect x="364.2" y="315" width="367" height="14" fill="#ffffff"/><rect x="720.3" y="315.5" width="10.7" height="10.5" fill="#e1e8ef"/><text x="365.6" y="324.3" font-size="6.6" fill="#8a8a8a" textLength="55.4" lengthAdjust="spacingAndGlyphs">Digital Oscilloscope</text><rect x="365" y="329" width="214.2" height="214.4" fill="#000"/><g stroke="#223222" stroke-width="0.9"><line x1="375.71" y1="329" x2="375.71" y2="543.4"/><line x1="365" y1="339.72" x2="579.2" y2="339.72"/><line x1="386.42" y1="329" x2="386.42" y2="543.4"/><line x1="365" y1="350.44" x2="579.2" y2="350.44"/><line x1="397.13" y1="329" x2="397.13" y2="543.4"/><line x1="365" y1="361.16" x2="579.2" y2="361.16"/><line x1="407.84" y1="329" x2="407.84" y2="543.4"/><line x1="365" y1="371.88" x2="579.2" y2="371.88"/><line x1="418.55" y1="329" x2="418.55" y2="543.4"/><line x1="365" y1="382.60" x2="579.2" y2="382.60"/><line x1="429.26" y1="329" x2="429.26" y2="543.4"/><line x1="365" y1="393.32" x2="579.2" y2="393.32"/><line x1="439.97" y1="329" x2="439.97" y2="543.4"/><line x1="365" y1="404.04" x2="579.2" y2="404.04"/><line x1="450.68" y1="329" x2="450.68" y2="543.4"/><line x1="365" y1="414.76" x2="579.2" y2="414.76"/><line x1="461.39" y1="329" x2="461.39" y2="543.4"/><line x1="365" y1="425.48" x2="579.2" y2="425.48"/><line x1="482.81" y1="329" x2="482.81" y2="543.4"/><line x1="365" y1="446.92" x2="579.2" y2="446.92"/><line x1="493.52" y1="329" x2="493.52" y2="543.4"/><line x1="365" y1="457.64" x2="579.2" y2="457.64"/><line x1="504.23" y1="329" x2="504.23" y2="543.4"/><line x1="365" y1="468.36" x2="579.2" y2="468.36"/><line x1="514.94" y1="329" x2="514.94" y2="543.4"/><line x1="365" y1="479.08" x2="579.2" y2="479.08"/><line x1="525.65" y1="329" x2="525.65" y2="543.4"/><line x1="365" y1="489.80" x2="579.2" y2="489.80"/><line x1="536.36" y1="329" x2="536.36" y2="543.4"/><line x1="365" y1="500.52" x2="579.2" y2="500.52"/><line x1="547.07" y1="329" x2="547.07" y2="543.4"/><line x1="365" y1="511.24" x2="579.2" y2="511.24"/><line x1="557.78" y1="329" x2="557.78" y2="543.4"/><line x1="365" y1="521.96" x2="579.2" y2="521.96"/><line x1="568.49" y1="329" x2="568.49" y2="543.4"/><line x1="365" y1="532.68" x2="579.2" y2="532.68"/></g><line x1="472.1" y1="329" x2="472.1" y2="543.4" stroke="#8a8a80" stroke-width="1" stroke-dasharray="1.6 1.4"/><polyline points="365.0,355.7 378.2,355.7 378.2,381.3 404.5,381.3 404.5,355.7 431.3,355.7 431.3,381.3 458.5,381.3 458.5,355.7 484.6,355.7 484.6,381.3 511.3,381.3 511.3,355.7 538.8,355.7 538.8,381.3 564.9,381.3 564.9,355.7 579.0,355.7" fill="none" stroke="#e6e2b4" stroke-width="0.95"/><polyline points="365.0,462.1 378.2,462.1 378.2,439.5 405.0,439.5 405.0,462.1 431.8,462.1 431.8,439.5 458.5,439.5 458.5,462.1 484.6,462.1 484.6,439.5 512.0,439.5 512.0,462.1 538.3,462.1 538.3,439.5 565.0,439.5 565.0,462.1 579.0,462.1" fill="none" stroke="#4f82c0" stroke-width="0.95"/><rect x="364.5" y="543.4" width="215" height="10.4" fill="#d4d4d4"/><rect x="364.5" y="543.4" width="9" height="10.4" fill="#f4f4f4"/><rect x="570.2" y="543.4" width="9.3" height="10.4" fill="#f4f4f4"/><path d="M370.2,546.4 L367.6,548.6 L370.2,550.8" fill="none" stroke="#444" stroke-width="1.1"/><path d="M573.8,546.4 L576.4,548.6 L573.8,550.8" fill="none" stroke="#444" stroke-width="1.1"/><rect x="363.5" y="553.7" width="368" height="1.5" fill="#3a3a3a"/><rect x="579.3" y="328.4" width="151.8" height="225.5" fill="#afafaf"/><rect x="579.2" y="328.4" width="1.6" height="225.5" fill="#c6c6c6"/><rect x="730.3" y="328.4" width="1.2" height="226.8" fill="#6a6a6a"/><rect x="630.4" y="328.4" width="1.1" height="225.5" fill="#3c3c3c"/><rect x="680.4" y="328.4" width="1.1" height="225.5" fill="#3c3c3c"/><rect x="581" y="441" width="149.5" height="1" fill="#7a7a7a"/><rect x="581" y="342" width="149.5" height="0.9" fill="#484848"/><rect x="581" y="342.9" width="149.5" height="0.9" fill="#cfcfcf"/><rect x="581" y="455.2" width="149.5" height="0.9" fill="#484848"/><rect x="581" y="456.09999999999997" width="149.5" height="0.9" fill="#cfcfcf"/><text x="605.5" y="338.2" font-size="6.3" fill="#ee8c7c" text-anchor="middle" font-weight="bold">Trigger</text><text x="655.5" y="338.2" font-size="6.3" fill="#f2f226" text-anchor="middle" font-weight="bold">Channel A</text><text x="705.5" y="338.2" font-size="6.3" fill="#e85a48" text-anchor="middle" font-weight="bold">Channel C</text><text x="605.5" y="451.4" font-size="6.3" fill="#ec8a5a" text-anchor="middle" font-weight="bold">Horizontal</text><text x="655.5" y="451.4" font-size="6.3" fill="#2e96dc" text-anchor="middle" font-weight="bold">Channel B</text><text x="705.5" y="451.4" font-size="6.3" fill="#3aa060" text-anchor="middle" font-weight="bold">Channel D</text><text x="597" y="349.2" font-size="5.4" fill="#333" text-anchor="middle" >Level</text><rect x="587" y="350" width="21" height="42" fill="#9a9a9a" stroke="#555" stroke-width="0.8"/><rect x="587.8" y="350.8" width="3.4" height="40" fill="#d2d2d2"/><rect x="603.8" y="350.8" width="3.4" height="40" fill="#d2d2d2"/><rect x="591.4" y="350.8" width="12.2" height="40.4" fill="url(#drumV)"/><rect x="587" y="390.6" width="21" height="1.4" fill="#5a5a5a"/><text x="598.0" y="361.2" font-size="5.6" fill="#333" text-anchor="middle" >-10</text><text x="598.0" y="371.5" font-size="5.6" fill="#333" text-anchor="middle" >0</text><text x="598.0" y="381.8" font-size="5.6" fill="#333" text-anchor="middle" >10</text><path d="M587.8,367.8 L590.6,370.0 L587.8,372.2 Z" fill="#e01010"/><path d="M607.2,367.8 L604.4,370.0 L607.2,372.2 Z" fill="#e01010"/><path d="M583.2,364 L585.2,367 L581.5,367 Z M583.2,376 L585.2,373 L581.5,373 Z" fill="#e8a090"/><text x="620.5" y="352.6" font-size="5.4" fill="#333" text-anchor="end" >AC</text><text x="620.5" y="359.4" font-size="5.4" fill="#333" text-anchor="end" >DC</text><rect x="621.8" y="344.2" width="8.2" height="17.2" fill="#5a5a5a"/><rect x="622.6999999999999" y="345.09999999999997" width="6.6" height="15.399999999999999" fill="#d6d6d6"/><rect x="624.9" y="346.8" width="2" height="12.0" fill="#141414"/><rect x="623.0999999999999" y="353.6" width="5.8" height="6.2" fill="#c4c4c4" stroke="#8a8a8a" stroke-width="0.5"/><line x1="623.8" y1="356.0" x2="628.1999999999999" y2="356.0" stroke="#9a9a9a" stroke-width="0.5"/><line x1="623.8" y1="357.40000000000003" x2="628.1999999999999" y2="357.40000000000003" stroke="#9a9a9a" stroke-width="0.5"/><rect x="621.8" y="367.7" width="8.2" height="17.2" fill="#5a5a5a"/><rect x="622.6999999999999" y="368.59999999999997" width="6.6" height="15.399999999999999" fill="#d6d6d6"/><rect x="624.9" y="370.3" width="2" height="12.0" fill="#141414"/><rect x="623.0999999999999" y="369.3" width="5.8" height="6.2" fill="#c4c4c4" stroke="#8a8a8a" stroke-width="0.5"/><line x1="623.8" y1="371.7" x2="628.1999999999999" y2="371.7" stroke="#9a9a9a" stroke-width="0.5"/><line x1="623.8" y1="373.1" x2="628.1999999999999" y2="373.1" stroke="#9a9a9a" stroke-width="0.5"/><path d="M620.5,370.5 L618.6,370.5 L618.6,376.5 L617.4,376.5 M618.6,376.5 L618.6,383 L620.5,383" fill="none" stroke="#333" stroke-width="0.8"/><text x="620.5" y="398.2" font-size="5.4" fill="#333" text-anchor="end" >Auto</text><rect x="621.7" y="392.3" width="8" height="7.2" fill="#f4dcd4" stroke="#707070" stroke-width="0.5"/><text x="620.5" y="406.8" font-size="5.4" fill="#333" text-anchor="end" >One-Shot</text><rect x="621.7" y="401" width="8" height="7.2" fill="url(#btn)" stroke="#404040" stroke-width="0.5"/><text x="620.5" y="415.4" font-size="5.4" fill="#333" text-anchor="end" >Cursors</text><rect x="621.7" y="409.6" width="8" height="7.2" fill="url(#btn)" stroke="#404040" stroke-width="0.5"/><text x="605.5" y="427" font-size="5.4" fill="#333" text-anchor="middle" >Source</text><circle cx="594.5" cy="430.5" r="1.8" fill="#e8e830"/><circle cx="602.7" cy="430.5" r="1.8" fill="#4aa0e0"/><circle cx="610.9" cy="430.5" r="1.8" fill="#e08070"/><circle cx="619.1" cy="430.5" r="1.8" fill="#40a060"/><rect x="589" y="432.4" width="34" height="7.4" fill="#c4c4c4" stroke="#555" stroke-width="0.7"/><rect x="590" y="433.5" width="6" height="5.4" fill="#b0b0b0" stroke="#666" stroke-width="0.4"/><rect x="597" y="434.6" width="24" height="2.2" fill="#404040"/><text x="647.5" y="349.2" font-size="5.4" fill="#333" text-anchor="middle" >Position</text><rect x="637" y="350" width="21" height="42" fill="#9a9a9a" stroke="#555" stroke-width="0.8"/><rect x="637.8" y="350.8" width="3.4" height="40" fill="#d2d2d2"/><rect x="653.8" y="350.8" width="3.4" height="40" fill="#d2d2d2"/><rect x="641.4" y="350.8" width="12.2" height="40.4" fill="url(#drumV)"/><rect x="637" y="390.6" width="21" height="1.4" fill="#5a5a5a"/><text x="648.0" y="361.2" font-size="5.6" fill="#333" text-anchor="middle" >90</text><text x="648.0" y="371.5" font-size="5.6" fill="#333" text-anchor="middle" >100</text><text x="648.0" y="381.8" font-size="5.6" fill="#333" text-anchor="middle" >110</text><path d="M637.8,367.8 L640.6,370.0 L637.8,372.2 Z" fill="#e01010"/><path d="M657.2,367.8 L654.4,370.0 L657.2,372.2 Z" fill="#e01010"/><path d="M634,364.5 L636.3,368 L631.8,368 Z M634,375.5 L636.3,372 L631.8,372 Z" fill="#e8e020"/><text x="670.5" y="352.5" font-size="5.4" fill="#333" text-anchor="end" >AC</text><text x="670.5" y="359.9" font-size="5.4" fill="#333" text-anchor="end" >DC</text><text x="670.5" y="367.3" font-size="5.4" fill="#333" text-anchor="end" >GND</text><text x="670.5" y="374.7" font-size="5.4" fill="#333" text-anchor="end" >OFF</text><rect x="672" y="344.2" width="8.2" height="32.8" fill="#5a5a5a"/><rect x="672.9" y="345.09999999999997" width="6.6" height="30.999999999999996" fill="#d6d6d6"/><rect x="675.1" y="346.8" width="2" height="27.599999999999998" fill="#141414"/><rect x="673.3" y="352.82" width="5.8" height="6.2" fill="#c4c4c4" stroke="#8a8a8a" stroke-width="0.5"/><line x1="674" y1="355.21999999999997" x2="678.4" y2="355.21999999999997" stroke="#9a9a9a" stroke-width="0.5"/><line x1="674" y1="356.62" x2="678.4" y2="356.62" stroke="#9a9a9a" stroke-width="0.5"/><text x="670" y="386.2" font-size="5.4" fill="#333" text-anchor="end" >Invert</text><rect x="671.5" y="380" width="8" height="7.2" fill="url(#btn)" stroke="#404040" stroke-width="0.5"/><text x="670" y="393.6" font-size="5.4" fill="#333" text-anchor="end" >A+B</text><rect x="671.5" y="387.4" width="8" height="7.2" fill="url(#btn)" stroke="#404040" stroke-width="0.5"/><path d="M633,439.8 L633,416.6 A23.19999999999999,23.19999999999999 0 0 1 679.4,416.6 L679.4,439.8 Z" fill="#ffffff"/><rect x="646.5" y="427.6" width="21" height="12.199999999999989" fill="#afafaf"/><rect x="648" y="433.0" width="18" height="6.6" fill="#fff" stroke="#303030" stroke-width="0.8"/><text x="649.2" y="438.5" font-size="5.4" fill="#333" text-anchor="start" >2</text><text x="637.4" y="425.6" font-size="4.3" fill="#3c3c3c" text-anchor="middle">10</text><line x1="641.9" y1="422.4" x2="640.3" y2="423.0" stroke="#505050" stroke-width="0.6"/><text x="635.9" y="417.9" font-size="4.3" fill="#3c3c3c" text-anchor="middle">5</text><line x1="640.8" y1="416.5" x2="639.0" y2="416.5" stroke="#505050" stroke-width="0.6"/><text x="637.5" y="410.2" font-size="4.3" fill="#3c3c3c" text-anchor="middle">2</text><line x1="642.0" y1="410.7" x2="640.3" y2="410.0" stroke="#505050" stroke-width="0.6"/><text x="641.9" y="403.6" font-size="4.3" fill="#3c3c3c" text-anchor="middle">1</text><line x1="645.3" y1="405.7" x2="644.1" y2="404.4" stroke="#505050" stroke-width="0.6"/><text x="648.4" y="399.3" font-size="4.3" fill="#3c3c3c" text-anchor="middle">0.5</text><line x1="650.3" y1="402.4" x2="649.6" y2="400.7" stroke="#505050" stroke-width="0.6"/><text x="656.1" y="397.7" font-size="4.3" fill="#3c3c3c" text-anchor="middle">0.2</text><line x1="656.2" y1="401.2" x2="656.1" y2="399.4" stroke="#505050" stroke-width="0.6"/><text x="663.9" y="399.2" font-size="4.3" fill="#3c3c3c" text-anchor="middle">0.1</text><line x1="662.0" y1="402.3" x2="662.7" y2="400.7" stroke="#505050" stroke-width="0.6"/><text x="670.4" y="403.5" font-size="4.3" fill="#3c3c3c" text-anchor="middle">50</text><line x1="667.0" y1="405.6" x2="668.3" y2="404.3" stroke="#505050" stroke-width="0.6"/><text x="674.9" y="410.0" font-size="4.3" fill="#3c3c3c" text-anchor="middle">20</text><line x1="670.4" y1="410.6" x2="672.0" y2="409.9" stroke="#505050" stroke-width="0.6"/><text x="676.5" y="417.7" font-size="4.3" fill="#3c3c3c" text-anchor="middle">10</text><line x1="671.6" y1="416.4" x2="673.4" y2="416.4" stroke="#505050" stroke-width="0.6"/><text x="675.1" y="425.5" font-size="4.3" fill="#3c3c3c" text-anchor="middle">5</text><line x1="670.5" y1="422.3" x2="672.2" y2="422.9" stroke="#505050" stroke-width="0.6"/><text x="670.8" y="432.1" font-size="4.3" fill="#3c3c3c" text-anchor="middle">2</text><line x1="667.3" y1="427.3" x2="668.6" y2="428.5" stroke="#505050" stroke-width="0.6"/><line x1="664.0" y1="403.2" x2="667.8" y2="396.5" stroke="#707070" stroke-width="0.7"/><circle cx="656.2" cy="416.6" r="15.6" fill="url(#knobO)" stroke="#6a6a6a" stroke-width="0.8"/><circle cx="656.7" cy="417.20000000000005" r="8" fill="url(#knobI)" stroke="#505050" stroke-width="0.6"/><rect x="643" y="410" width="5" height="5" fill="#f0f020"/><circle cx="661.5" cy="422.5" r="1.6" fill="#e0e020"/><text x="636.8" y="433.2" font-size="4.4" fill="#555" text-anchor="start" >μV</text><text x="676.4" y="433.2" font-size="4.4" fill="#555" text-anchor="end" >V</text><text x="637" y="439.0" font-size="6.4" fill="#333" text-anchor="start" >V</text><text x="678.1999999999999" y="439.0" font-size="6.4" fill="#333" text-anchor="end" >mV</text><text x="697.5" y="349.2" font-size="5.4" fill="#333" text-anchor="middle" >Position</text><rect x="687" y="350" width="21" height="42" fill="#9a9a9a" stroke="#555" stroke-width="0.8"/><rect x="687.8" y="350.8" width="3.4" height="40" fill="#d2d2d2"/><rect x="703.8" y="350.8" width="3.4" height="40" fill="#d2d2d2"/><rect x="691.4" y="350.8" width="12.2" height="40.4" fill="url(#drumV)"/><rect x="687" y="390.6" width="21" height="1.4" fill="#5a5a5a"/><text x="698.0" y="361.2" font-size="5.6" fill="#333" text-anchor="middle" >-50</text><text x="698.0" y="371.5" font-size="5.6" fill="#333" text-anchor="middle" >-45</text><text x="698.0" y="381.8" font-size="5.6" fill="#333" text-anchor="middle" >-35</text><path d="M687.8,367.8 L690.6,370.0 L687.8,372.2 Z" fill="#e01010"/><path d="M707.2,367.8 L704.4,370.0 L707.2,372.2 Z" fill="#e01010"/><path d="M684,364.5 L686,368 L682,368 Z M684,375.5 L686,372 L682,372 Z" fill="#e05040"/><text x="720.5" y="352.5" font-size="5.4" fill="#333" text-anchor="end" >AC</text><text x="720.5" y="359.9" font-size="5.4" fill="#333" text-anchor="end" >DC</text><text x="720.5" y="367.3" font-size="5.4" fill="#333" text-anchor="end" >GND</text><text x="720.5" y="374.7" font-size="5.4" fill="#333" text-anchor="end" >OFF</text><rect x="722.3" y="344.2" width="8.2" height="32.8" fill="#5a5a5a"/><rect x="723.1999999999999" y="345.09999999999997" width="6.6" height="30.999999999999996" fill="#d6d6d6"/><rect x="725.4" y="346.8" width="2" height="27.599999999999998" fill="#141414"/><rect x="723.5999999999999" y="369.2" width="5.8" height="6.2" fill="#c4c4c4" stroke="#8a8a8a" stroke-width="0.5"/><line x1="724.3" y1="371.59999999999997" x2="728.6999999999999" y2="371.59999999999997" stroke="#9a9a9a" stroke-width="0.5"/><line x1="724.3" y1="373.0" x2="728.6999999999999" y2="373.0" stroke="#9a9a9a" stroke-width="0.5"/><text x="720" y="386.2" font-size="5.4" fill="#333" text-anchor="end" >Invert</text><rect x="721.6" y="380" width="8" height="7.2" fill="url(#btn)" stroke="#404040" stroke-width="0.5"/><text x="720" y="393.6" font-size="5.4" fill="#333" text-anchor="end" >C+D</text><rect x="721.6" y="387.4" width="8" height="7.2" fill="url(#btn)" stroke="#404040" stroke-width="0.5"/><path d="M682.6,439.8 L682.6,416.6 A23.5,23.5 0 0 1 729.6,416.6 L729.6,439.8 Z" fill="#ffffff"/><rect x="696.2" y="427.6" width="21.09999999999991" height="12.199999999999989" fill="#afafaf"/><rect x="697.7" y="433.0" width="18.09999999999991" height="6.6" fill="#fff" stroke="#303030" stroke-width="0.8"/><text x="698.9000000000001" y="438.5" font-size="5.4" fill="#333" text-anchor="start" >5</text><text x="687.0" y="425.6" font-size="4.3" fill="#3c3c3c" text-anchor="middle">10</text><line x1="691.5" y1="422.4" x2="689.9" y2="423.0" stroke="#505050" stroke-width="0.6"/><text x="685.5" y="417.9" font-size="4.3" fill="#3c3c3c" text-anchor="middle">5</text><line x1="690.4" y1="416.5" x2="688.6" y2="416.5" stroke="#505050" stroke-width="0.6"/><text x="687.1" y="410.2" font-size="4.3" fill="#3c3c3c" text-anchor="middle">2</text><line x1="691.6" y1="410.7" x2="689.9" y2="410.0" stroke="#505050" stroke-width="0.6"/><text x="691.5" y="403.6" font-size="4.3" fill="#3c3c3c" text-anchor="middle">1</text><line x1="694.9" y1="405.7" x2="693.7" y2="404.4" stroke="#505050" stroke-width="0.6"/><text x="698.0" y="399.3" font-size="4.3" fill="#3c3c3c" text-anchor="middle">0.5</text><line x1="699.9" y1="402.4" x2="699.2" y2="400.7" stroke="#505050" stroke-width="0.6"/><text x="705.7" y="397.7" font-size="4.3" fill="#3c3c3c" text-anchor="middle">0.2</text><line x1="705.8" y1="401.2" x2="705.7" y2="399.4" stroke="#505050" stroke-width="0.6"/><text x="713.5" y="399.2" font-size="4.3" fill="#3c3c3c" text-anchor="middle">0.1</text><line x1="711.6" y1="402.3" x2="712.3" y2="400.7" stroke="#505050" stroke-width="0.6"/><text x="720.0" y="403.5" font-size="4.3" fill="#3c3c3c" text-anchor="middle">50</text><line x1="716.6" y1="405.6" x2="717.9" y2="404.3" stroke="#505050" stroke-width="0.6"/><text x="724.5" y="410.0" font-size="4.3" fill="#3c3c3c" text-anchor="middle">20</text><line x1="720.0" y1="410.6" x2="721.6" y2="409.9" stroke="#505050" stroke-width="0.6"/><text x="726.1" y="417.7" font-size="4.3" fill="#3c3c3c" text-anchor="middle">10</text><line x1="721.2" y1="416.4" x2="723.0" y2="416.4" stroke="#505050" stroke-width="0.6"/><text x="724.7" y="425.5" font-size="4.3" fill="#3c3c3c" text-anchor="middle">5</text><line x1="720.1" y1="422.3" x2="721.8" y2="422.9" stroke="#505050" stroke-width="0.6"/><text x="720.4" y="432.1" font-size="4.3" fill="#3c3c3c" text-anchor="middle">2</text><line x1="716.9" y1="427.3" x2="718.2" y2="428.5" stroke="#505050" stroke-width="0.6"/><line x1="713.5" y1="403.2" x2="717.5" y2="396.2" stroke="#707070" stroke-width="0.7"/><circle cx="705.8" cy="416.6" r="15.6" fill="url(#knobO)" stroke="#6a6a6a" stroke-width="0.8"/><circle cx="706.3" cy="417.20000000000005" r="8" fill="url(#knobI)" stroke="#505050" stroke-width="0.6"/><path d="M690.6,416.5 L695.6,413.8 L695.6,419.2 Z" fill="#e01010"/><circle cx="711" cy="423" r="1.5" fill="#d02020"/><text x="686.4" y="433.2" font-size="4.4" fill="#555" text-anchor="start" >μV</text><text x="726.6" y="433.2" font-size="4.4" fill="#555" text-anchor="end" >V</text><text x="686.6" y="439.0" font-size="6.4" fill="#333" text-anchor="start" >V</text><text x="728.4" y="439.0" font-size="6.4" fill="#333" text-anchor="end" >mV</text><text x="605.5" y="462.6" font-size="5.4" fill="#333" text-anchor="middle" >Source</text><circle cx="591.0" cy="466.3" r="1.8" fill="#e09070"/><circle cx="599.4" cy="466.3" r="1.8" fill="#e8e830"/><circle cx="607.8" cy="466.3" r="1.8" fill="#4aa0e0"/><circle cx="616.2" cy="466.3" r="1.8" fill="#e08070"/><circle cx="624.6" cy="466.3" r="1.8" fill="#40a060"/><rect x="585" y="469.3" width="42.6" height="7.3" fill="#c4c4c4" stroke="#555" stroke-width="0.7"/><rect x="586" y="470.3" width="7" height="5.4" fill="#b0b0b0" stroke="#666" stroke-width="0.4"/><rect x="594" y="471.6" width="31.5" height="2.2" fill="#404040"/><text x="605.5" y="483.8" font-size="5.4" fill="#333" text-anchor="middle" >Position</text><rect x="585.7" y="484.4" width="40.7" height="20.8" fill="#c8c8c8" stroke="#555" stroke-width="0.8"/><rect x="587.2" y="488" width="37.7" height="14" fill="url(#drumH)"/><rect x="587.2" y="488" width="37.7" height="14" fill="none" stroke="#444" stroke-width="0.6"/><text x="592" y="497.6" font-size="5.8" fill="#222" text-anchor="middle" >210</text><text x="606" y="497.6" font-size="5.8" fill="#222" text-anchor="middle" >200</text><text x="620" y="497.6" font-size="5.8" fill="#222" text-anchor="middle" >190</text><path d="M602.8,485 L608.8,485 L605.8,488 Z" fill="#e01010"/><path d="M602.8,505 L608.8,505 L605.8,502 Z" fill="#e01010"/><path d="M582,553.2 L582,528.3 A23.80000000000001,23.80000000000001 0 0 1 629.6,528.3 L629.6,553.2 Z" fill="#ffffff"/><rect x="594.5" y="539.3" width="22.5" height="13.900000000000091" fill="#afafaf"/><rect x="596" y="546.4000000000001" width="19.5" height="6.6" fill="#fff" stroke="#303030" stroke-width="0.8"/><text x="597.2" y="551.9000000000001" font-size="5.4" fill="#333" text-anchor="start" >0.2</text><text x="588.5" y="539.7" font-size="3.6" fill="#3c3c3c" text-anchor="middle">100</text><line x1="592.5" y1="536.0" x2="590.9" y2="536.9" stroke="#505050" stroke-width="0.6"/><text x="586.4" y="534.6" font-size="3.6" fill="#3c3c3c" text-anchor="middle">50</text><line x1="590.9" y1="532.1" x2="589.1" y2="532.5" stroke="#505050" stroke-width="0.6"/><text x="585.8" y="529.2" font-size="3.6" fill="#3c3c3c" text-anchor="middle">20</text><line x1="590.4" y1="527.9" x2="588.6" y2="527.8" stroke="#505050" stroke-width="0.6"/><text x="586.7" y="523.8" font-size="3.6" fill="#3c3c3c" text-anchor="middle">10</text><line x1="591.1" y1="523.7" x2="589.4" y2="523.2" stroke="#505050" stroke-width="0.6"/><text x="589.0" y="518.8" font-size="3.6" fill="#3c3c3c" text-anchor="middle">5</text><line x1="592.9" y1="519.9" x2="591.4" y2="518.9" stroke="#505050" stroke-width="0.6"/><text x="592.6" y="514.7" font-size="3.6" fill="#3c3c3c" text-anchor="middle">2</text><line x1="595.6" y1="516.7" x2="594.5" y2="515.4" stroke="#505050" stroke-width="0.6"/><text x="597.2" y="511.6" font-size="3.6" fill="#3c3c3c" text-anchor="middle">1</text><line x1="599.2" y1="514.4" x2="598.4" y2="512.8" stroke="#505050" stroke-width="0.6"/><text x="602.4" y="510.0" font-size="3.6" fill="#3c3c3c" text-anchor="middle">0.5</text><line x1="603.2" y1="513.1" x2="602.9" y2="511.3" stroke="#505050" stroke-width="0.6"/><text x="607.9" y="509.8" font-size="3.6" fill="#3c3c3c" text-anchor="middle">0.2</text><line x1="607.4" y1="513.0" x2="607.6" y2="511.2" stroke="#505050" stroke-width="0.6"/><text x="613.2" y="511.1" font-size="3.6" fill="#3c3c3c" text-anchor="middle">0.1</text><line x1="611.5" y1="514.0" x2="612.2" y2="512.3" stroke="#505050" stroke-width="0.6"/><text x="618.0" y="513.8" font-size="3.6" fill="#3c3c3c" text-anchor="middle">50</text><line x1="615.2" y1="516.1" x2="616.3" y2="514.7" stroke="#505050" stroke-width="0.6"/><text x="621.8" y="517.7" font-size="3.6" fill="#3c3c3c" text-anchor="middle">20</text><line x1="618.1" y1="519.1" x2="619.6" y2="518.0" stroke="#505050" stroke-width="0.6"/><text x="624.5" y="522.5" font-size="3.6" fill="#3c3c3c" text-anchor="middle">10</text><line x1="620.2" y1="522.8" x2="621.9" y2="522.1" stroke="#505050" stroke-width="0.6"/><text x="625.7" y="527.9" font-size="3.6" fill="#3c3c3c" text-anchor="middle">5</text><line x1="621.1" y1="526.9" x2="622.9" y2="526.7" stroke="#505050" stroke-width="0.6"/><text x="625.5" y="533.3" font-size="3.6" fill="#3c3c3c" text-anchor="middle">2</text><line x1="620.9" y1="531.1" x2="622.7" y2="531.4" stroke="#505050" stroke-width="0.6"/><text x="623.7" y="538.5" font-size="3.6" fill="#3c3c3c" text-anchor="middle">1</text><line x1="619.6" y1="535.1" x2="621.2" y2="535.9" stroke="#505050" stroke-width="0.6"/><text x="620.7" y="543.1" font-size="3.6" fill="#3c3c3c" text-anchor="middle">0.5</text><line x1="617.2" y1="538.6" x2="618.6" y2="539.8" stroke="#505050" stroke-width="0.6"/><line x1="613.5" y1="514.9" x2="617.7" y2="507.7" stroke="#707070" stroke-width="0.7"/><circle cx="605.8" cy="528.3" r="15.6" fill="url(#knobO)" stroke="#6a6a6a" stroke-width="0.8"/><circle cx="606.3" cy="528.9" r="8" fill="url(#knobI)" stroke="#505050" stroke-width="0.6"/><path d="M590,527 L587,533 L593,533 Z" fill="none" stroke="#e88060" stroke-width="0.9"/><circle cx="611.5" cy="533.5" r="1.5" fill="#e08050"/><text x="585.8" y="546.6" font-size="4.4" fill="#555" text-anchor="start" >200</text><text x="626.6" y="546.6" font-size="4.4" fill="#555" text-anchor="end" >0.5</text><text x="586" y="552.4000000000001" font-size="6.4" fill="#333" text-anchor="start" >ms</text><text x="628.4" y="552.4000000000001" font-size="6.4" fill="#333" text-anchor="end" >μs</text><text x="647.5" y="462.2" font-size="5.4" fill="#333" text-anchor="middle" >Position</text><rect x="637" y="463" width="21" height="42" fill="#9a9a9a" stroke="#555" stroke-width="0.8"/><rect x="637.8" y="463.8" width="3.4" height="40" fill="#d2d2d2"/><rect x="653.8" y="463.8" width="3.4" height="40" fill="#d2d2d2"/><rect x="641.4" y="463.8" width="12.2" height="40.4" fill="url(#drumV)"/><rect x="637" y="503.6" width="21" height="1.4" fill="#5a5a5a"/><text x="648.0" y="474.2" font-size="5.6" fill="#333" text-anchor="middle" >-60</text><text x="648.0" y="484.5" font-size="5.6" fill="#333" text-anchor="middle" >-50</text><text x="648.0" y="494.8" font-size="5.6" fill="#333" text-anchor="middle" >-40</text><path d="M637.8,480.8 L640.6,483.0 L637.8,485.2 Z" fill="#e01010"/><path d="M657.2,480.8 L654.4,483.0 L657.2,485.2 Z" fill="#e01010"/><path d="M634,477.5 L636.3,481 L631.8,481 Z M634,488.5 L636.3,485 L631.8,485 Z" fill="#3a9ad8"/><text x="670.5" y="465.1" font-size="5.4" fill="#333" text-anchor="end" >AC</text><text x="670.5" y="472.5" font-size="5.4" fill="#333" text-anchor="end" >DC</text><text x="670.5" y="479.90000000000003" font-size="5.4" fill="#333" text-anchor="end" >GND</text><text x="670.5" y="487.3" font-size="5.4" fill="#333" text-anchor="end" >OFF</text><rect x="672" y="457.2" width="8.2" height="32.8" fill="#5a5a5a"/><rect x="672.9" y="458.09999999999997" width="6.6" height="30.999999999999996" fill="#d6d6d6"/><rect x="675.1" y="459.8" width="2" height="27.599999999999998" fill="#141414"/><rect x="673.3" y="465.82" width="5.8" height="6.2" fill="#c4c4c4" stroke="#8a8a8a" stroke-width="0.5"/><line x1="674" y1="468.21999999999997" x2="678.4" y2="468.21999999999997" stroke="#9a9a9a" stroke-width="0.5"/><line x1="674" y1="469.62" x2="678.4" y2="469.62" stroke="#9a9a9a" stroke-width="0.5"/><text x="670" y="498.6" font-size="5.4" fill="#333" text-anchor="end" >Invert</text><rect x="671.2" y="492.3" width="8" height="7.2" fill="url(#btn)" stroke="#404040" stroke-width="0.5"/><path d="M632.9,553.2 L632.9,528.9 A23.600000000000023,23.600000000000023 0 0 1 680.1,528.9 L680.1,553.2 Z" fill="#ffffff"/><rect x="645.3" y="539.9" width="21.90000000000009" height="13.300000000000068" fill="#afafaf"/><rect x="646.8" y="546.4000000000001" width="18.90000000000009" height="6.6" fill="#fff" stroke="#303030" stroke-width="0.8"/><text x="648.0" y="551.9000000000001" font-size="5.4" fill="#333" text-anchor="start" >2</text><text x="637.2" y="537.9" font-size="4.3" fill="#3c3c3c" text-anchor="middle">10</text><line x1="641.7" y1="534.7" x2="640.1" y2="535.3" stroke="#505050" stroke-width="0.6"/><text x="635.7" y="530.2" font-size="4.3" fill="#3c3c3c" text-anchor="middle">5</text><line x1="640.6" y1="528.8" x2="638.8" y2="528.8" stroke="#505050" stroke-width="0.6"/><text x="637.3" y="522.5" font-size="4.3" fill="#3c3c3c" text-anchor="middle">2</text><line x1="641.8" y1="523.0" x2="640.1" y2="522.3" stroke="#505050" stroke-width="0.6"/><text x="641.7" y="515.9" font-size="4.3" fill="#3c3c3c" text-anchor="middle">1</text><line x1="645.1" y1="518.0" x2="643.9" y2="516.7" stroke="#505050" stroke-width="0.6"/><text x="648.2" y="511.6" font-size="4.3" fill="#3c3c3c" text-anchor="middle">0.5</text><line x1="650.1" y1="514.7" x2="649.4" y2="513.0" stroke="#505050" stroke-width="0.6"/><text x="655.9" y="510.0" font-size="4.3" fill="#3c3c3c" text-anchor="middle">0.2</text><line x1="656.0" y1="513.5" x2="655.9" y2="511.7" stroke="#505050" stroke-width="0.6"/><text x="663.7" y="511.5" font-size="4.3" fill="#3c3c3c" text-anchor="middle">0.1</text><line x1="661.8" y1="514.6" x2="662.5" y2="513.0" stroke="#505050" stroke-width="0.6"/><text x="670.2" y="515.8" font-size="4.3" fill="#3c3c3c" text-anchor="middle">50</text><line x1="666.8" y1="517.9" x2="668.1" y2="516.6" stroke="#505050" stroke-width="0.6"/><text x="674.7" y="522.3" font-size="4.3" fill="#3c3c3c" text-anchor="middle">20</text><line x1="670.2" y1="522.9" x2="671.8" y2="522.2" stroke="#505050" stroke-width="0.6"/><text x="676.3" y="530.0" font-size="4.3" fill="#3c3c3c" text-anchor="middle">10</text><line x1="671.4" y1="528.7" x2="673.2" y2="528.7" stroke="#505050" stroke-width="0.6"/><text x="674.9" y="537.8" font-size="4.3" fill="#3c3c3c" text-anchor="middle">5</text><line x1="670.3" y1="534.6" x2="672.0" y2="535.2" stroke="#505050" stroke-width="0.6"/><text x="670.6" y="544.4" font-size="4.3" fill="#3c3c3c" text-anchor="middle">2</text><line x1="667.1" y1="539.6" x2="668.4" y2="540.8" stroke="#505050" stroke-width="0.6"/><line x1="663.8" y1="515.5" x2="667.8" y2="508.5" stroke="#707070" stroke-width="0.7"/><circle cx="656" cy="528.9" r="15.6" fill="url(#knobO)" stroke="#6a6a6a" stroke-width="0.8"/><circle cx="656.5" cy="529.5" r="8" fill="url(#knobI)" stroke="#505050" stroke-width="0.6"/><path d="M643.5,524.8 L649.5,521.5 L648,527.5 Z" fill="#1a78d0"/><circle cx="661.5" cy="534.5" r="1.5" fill="#1a78d0"/><text x="636.6999999999999" y="546.6" font-size="4.4" fill="#555" text-anchor="start" >μV</text><text x="677.1" y="546.6" font-size="4.4" fill="#555" text-anchor="end" >V</text><text x="636.9" y="552.4000000000001" font-size="6.4" fill="#333" text-anchor="start" >V</text><text x="678.9" y="552.4000000000001" font-size="6.4" fill="#333" text-anchor="end" >mV</text><text x="697.5" y="462.2" font-size="5.4" fill="#333" text-anchor="middle" >Position</text><rect x="687" y="463" width="21" height="42" fill="#9a9a9a" stroke="#555" stroke-width="0.8"/><rect x="687.8" y="463.8" width="3.4" height="40" fill="#d2d2d2"/><rect x="703.8" y="463.8" width="3.4" height="40" fill="#d2d2d2"/><rect x="691.4" y="463.8" width="12.2" height="40.4" fill="url(#drumV)"/><rect x="687" y="503.6" width="21" height="1.4" fill="#5a5a5a"/><text x="698.0" y="474.2" font-size="5.6" fill="#333" text-anchor="middle" >-130</text><text x="698.0" y="484.5" font-size="5.6" fill="#333" text-anchor="middle" >-121</text><text x="698.0" y="494.8" font-size="5.6" fill="#333" text-anchor="middle" >-112</text><path d="M687.8,480.8 L690.6,483.0 L687.8,485.2 Z" fill="#e01010"/><path d="M707.2,480.8 L704.4,483.0 L707.2,485.2 Z" fill="#e01010"/><path d="M684,477.5 L686,481 L682,481 Z M684,488.5 L686,485 L682,485 Z" fill="#20506a"/><text x="720.5" y="465.1" font-size="5.4" fill="#333" text-anchor="end" >AC</text><text x="720.5" y="472.5" font-size="5.4" fill="#333" text-anchor="end" >DC</text><text x="720.5" y="479.90000000000003" font-size="5.4" fill="#333" text-anchor="end" >GND</text><text x="720.5" y="487.3" font-size="5.4" fill="#333" text-anchor="end" >OFF</text><rect x="722.3" y="457.2" width="8.2" height="32.8" fill="#5a5a5a"/><rect x="723.1999999999999" y="458.09999999999997" width="6.6" height="30.999999999999996" fill="#d6d6d6"/><rect x="725.4" y="459.8" width="2" height="27.599999999999998" fill="#141414"/><rect x="723.5999999999999" y="482.2" width="5.8" height="6.2" fill="#c4c4c4" stroke="#8a8a8a" stroke-width="0.5"/><line x1="724.3" y1="484.59999999999997" x2="728.6999999999999" y2="484.59999999999997" stroke="#9a9a9a" stroke-width="0.5"/><line x1="724.3" y1="486.0" x2="728.6999999999999" y2="486.0" stroke="#9a9a9a" stroke-width="0.5"/><text x="720" y="498.6" font-size="5.4" fill="#333" text-anchor="end" >Invert</text><rect x="721.5" y="492.3" width="8" height="7.2" fill="url(#btn)" stroke="#404040" stroke-width="0.5"/><path d="M682.7,553.2 L682.7,528.9 A23.399999999999977,23.399999999999977 0 0 1 729.5,528.9 L729.5,553.2 Z" fill="#ffffff"/><rect x="695.5" y="539.9" width="21.5" height="13.300000000000068" fill="#afafaf"/><rect x="697" y="546.4000000000001" width="18.5" height="6.6" fill="#fff" stroke="#303030" stroke-width="0.8"/><text x="698.2" y="551.9000000000001" font-size="5.4" fill="#333" text-anchor="start" >5</text><text x="687.0" y="537.9" font-size="4.3" fill="#3c3c3c" text-anchor="middle">10</text><line x1="691.5" y1="534.7" x2="689.9" y2="535.3" stroke="#505050" stroke-width="0.6"/><text x="685.5" y="530.2" font-size="4.3" fill="#3c3c3c" text-anchor="middle">5</text><line x1="690.4" y1="528.8" x2="688.6" y2="528.8" stroke="#505050" stroke-width="0.6"/><text x="687.1" y="522.5" font-size="4.3" fill="#3c3c3c" text-anchor="middle">2</text><line x1="691.6" y1="523.0" x2="689.9" y2="522.3" stroke="#505050" stroke-width="0.6"/><text x="691.5" y="515.9" font-size="4.3" fill="#3c3c3c" text-anchor="middle">1</text><line x1="694.9" y1="518.0" x2="693.7" y2="516.7" stroke="#505050" stroke-width="0.6"/><text x="698.0" y="511.6" font-size="4.3" fill="#3c3c3c" text-anchor="middle">0.5</text><line x1="699.9" y1="514.7" x2="699.2" y2="513.0" stroke="#505050" stroke-width="0.6"/><text x="705.7" y="510.0" font-size="4.3" fill="#3c3c3c" text-anchor="middle">0.2</text><line x1="705.8" y1="513.5" x2="705.7" y2="511.7" stroke="#505050" stroke-width="0.6"/><text x="713.5" y="511.5" font-size="4.3" fill="#3c3c3c" text-anchor="middle">0.1</text><line x1="711.6" y1="514.6" x2="712.3" y2="513.0" stroke="#505050" stroke-width="0.6"/><text x="720.0" y="515.8" font-size="4.3" fill="#3c3c3c" text-anchor="middle">50</text><line x1="716.6" y1="517.9" x2="717.9" y2="516.6" stroke="#505050" stroke-width="0.6"/><text x="724.5" y="522.3" font-size="4.3" fill="#3c3c3c" text-anchor="middle">20</text><line x1="720.0" y1="522.9" x2="721.6" y2="522.2" stroke="#505050" stroke-width="0.6"/><text x="726.1" y="530.0" font-size="4.3" fill="#3c3c3c" text-anchor="middle">10</text><line x1="721.2" y1="528.7" x2="723.0" y2="528.7" stroke="#505050" stroke-width="0.6"/><text x="724.7" y="537.8" font-size="4.3" fill="#3c3c3c" text-anchor="middle">5</text><line x1="720.1" y1="534.6" x2="721.8" y2="535.2" stroke="#505050" stroke-width="0.6"/><text x="720.4" y="544.4" font-size="4.3" fill="#3c3c3c" text-anchor="middle">2</text><line x1="716.9" y1="539.6" x2="718.2" y2="540.8" stroke="#505050" stroke-width="0.6"/><line x1="713.5" y1="515.5" x2="717.5" y2="508.6" stroke="#707070" stroke-width="0.7"/><circle cx="705.8" cy="528.9" r="15.6" fill="url(#knobO)" stroke="#6a6a6a" stroke-width="0.8"/><circle cx="706.3" cy="529.5" r="8" fill="url(#knobI)" stroke="#505050" stroke-width="0.6"/><path d="M692,528.6 L697.5,525.5 L697.5,531.5 Z" fill="#104020"/><circle cx="711" cy="534" r="1.5" fill="#104020"/><text x="686.5" y="546.6" font-size="4.4" fill="#555" text-anchor="start" >μV</text><text x="726.5" y="546.6" font-size="4.4" fill="#555" text-anchor="end" >V</text><text x="686.7" y="552.4000000000001" font-size="6.4" fill="#333" text-anchor="start" >V</text><text x="728.3" y="552.4000000000001" font-size="6.4" fill="#333" text-anchor="end" >mV</text></svg>
</body></html>
